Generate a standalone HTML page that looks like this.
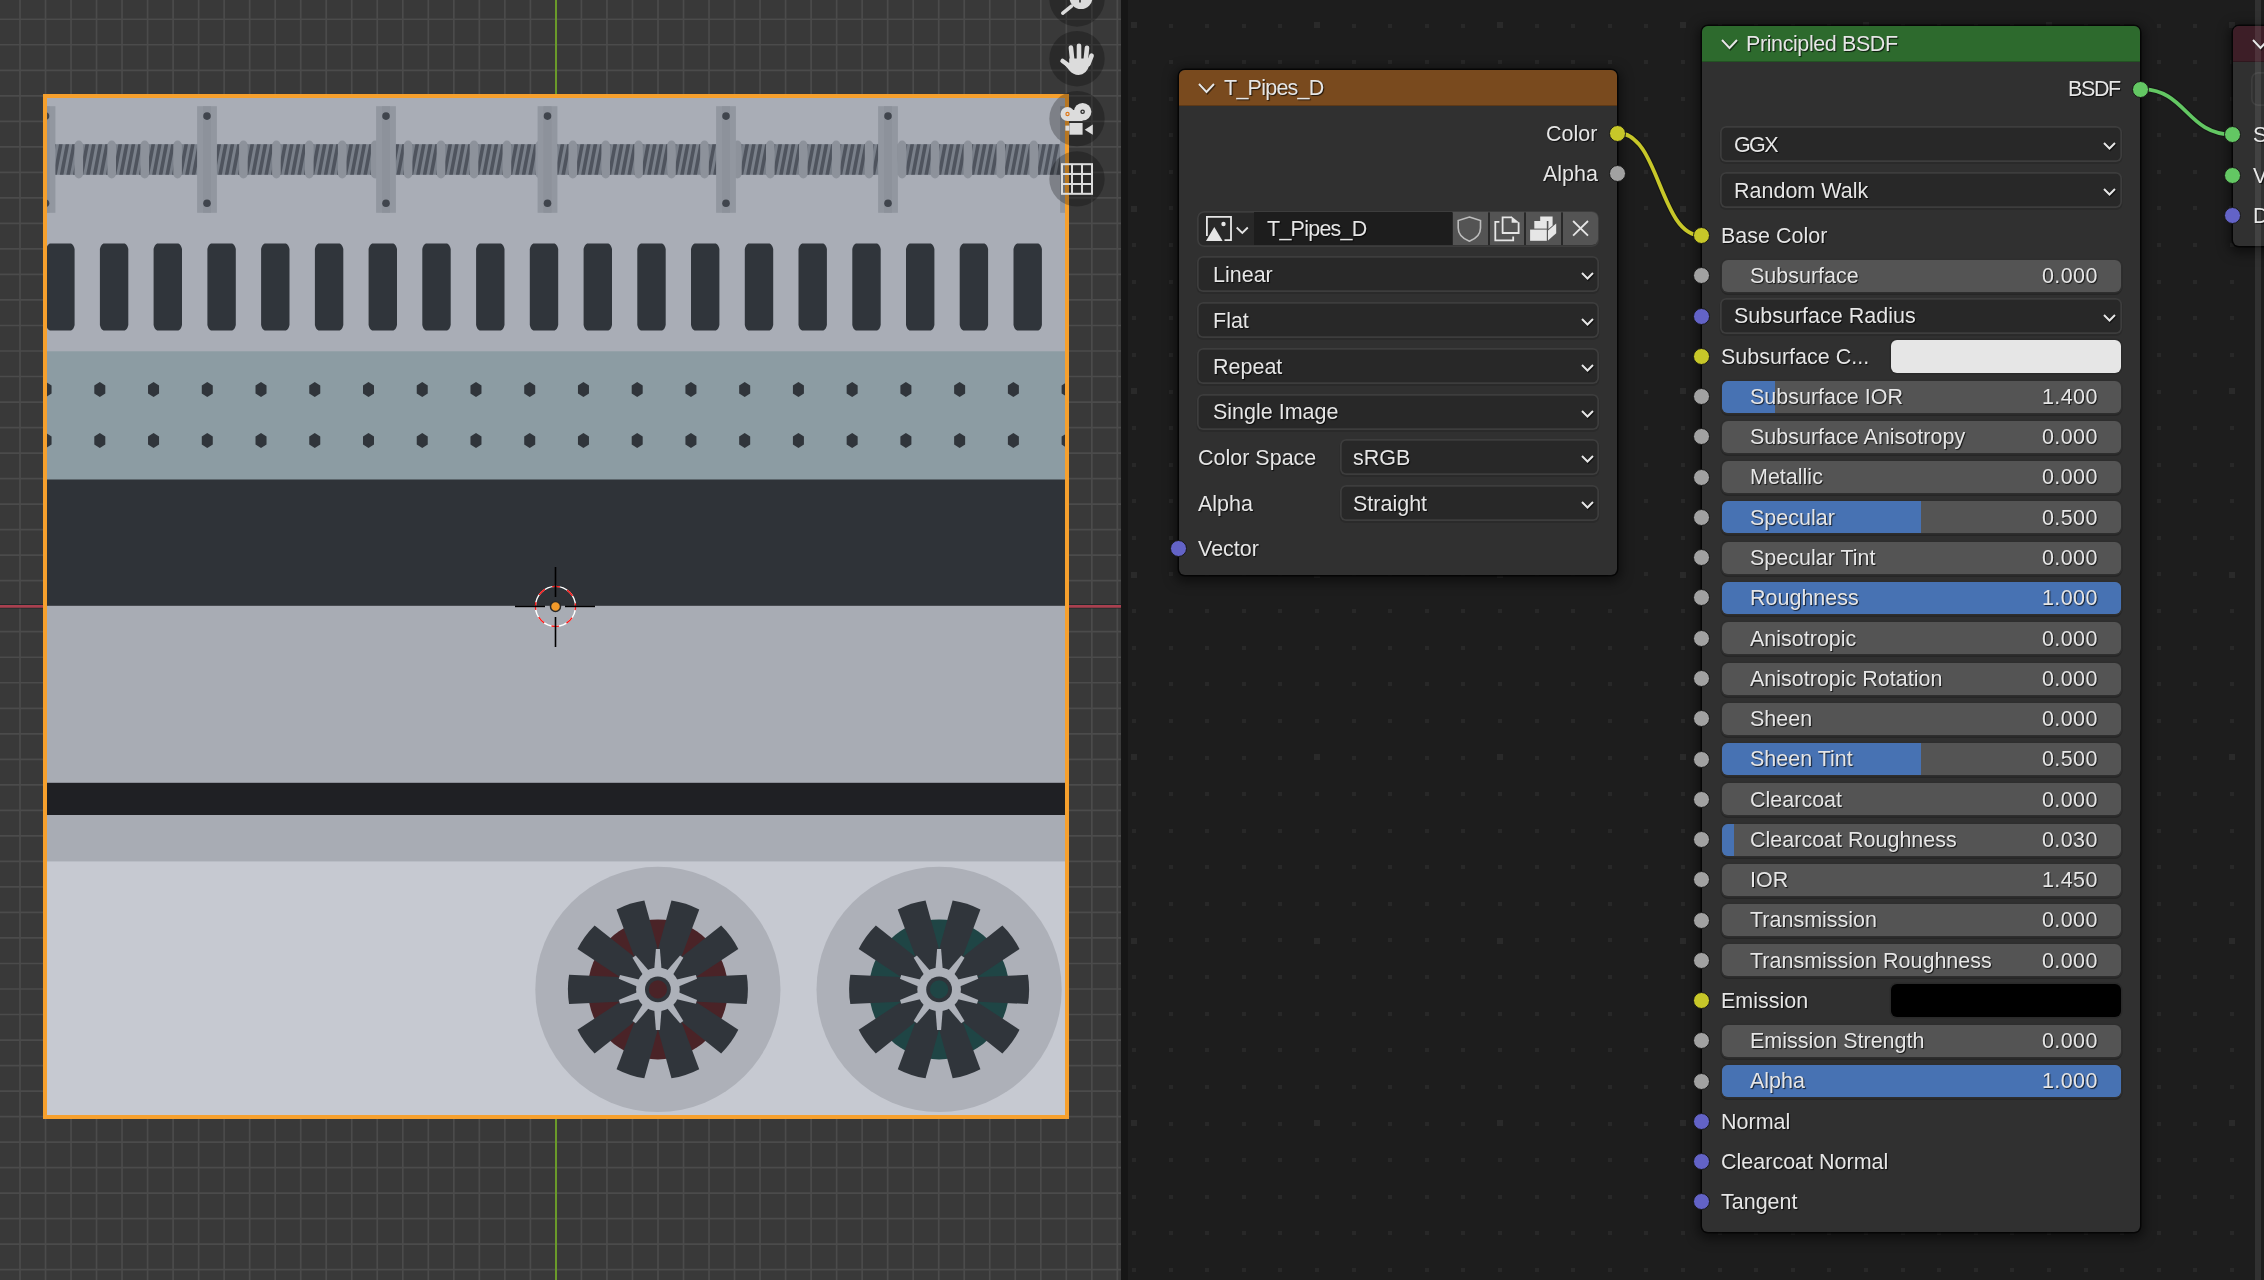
<!DOCTYPE html>
<html><head><meta charset="utf-8"><title>Blender</title>
<style>
html,body{margin:0;padding:0;width:2264px;height:1280px;overflow:hidden;background:#1d1d1d;}
*{box-sizing:border-box;}
.abs{position:absolute;}
.t{position:absolute;font-family:"Liberation Sans", sans-serif;font-size:21.5px;line-height:1;color:#e6e6e6;white-space:nowrap;text-shadow:1px 1px 1px rgba(0,0,0,0.75);will-change:transform;}
.node{position:absolute;background:#303030;border-radius:6px;box-shadow:0 0 0 1.5px rgba(0,0,0,0.7),0 3px 12px 4px rgba(0,0,0,0.5);}
.hdr{position:absolute;left:0;top:0;right:0;border-radius:6px 6px 0 0;box-shadow:inset 0 -1px 0 rgba(0,0,0,0.22);}
.sl{position:absolute;background:#545454;border-radius:6px;box-shadow:0 0 0 1.5px #2e2e2e, 0 1.5px 0 1.5px #262626;overflow:hidden;}
.fill{position:absolute;left:0;top:0;bottom:0;background:#4772b3;}
.dd{position:absolute;background:#282828;border-radius:6px;box-shadow:inset 0 0 0 1.7px #3d3d3d, 0 1.5px 0 0.5px #2a2a2a;}
.sock{position:absolute;width:17px;height:17px;border-radius:50%;border:1.7px solid #181818;}
</style></head><body>

<svg class="abs" style="left:0;top:0" width="1121" height="1280" viewBox="0 0 1121 1280">
<rect x="0" y="0" width="1121" height="1280" fill="#393939"/>
<g stroke="#4b4b4b" stroke-width="1.7"><line x1="19.98" y1="0" x2="19.98" y2="1280"/><line x1="45.50" y1="0" x2="45.50" y2="1280"/><line x1="71.02" y1="0" x2="71.02" y2="1280"/><line x1="96.54" y1="0" x2="96.54" y2="1280"/><line x1="122.06" y1="0" x2="122.06" y2="1280"/><line x1="147.58" y1="0" x2="147.58" y2="1280"/><line x1="173.10" y1="0" x2="173.10" y2="1280"/><line x1="198.62" y1="0" x2="198.62" y2="1280"/><line x1="224.14" y1="0" x2="224.14" y2="1280"/><line x1="249.66" y1="0" x2="249.66" y2="1280"/><line x1="275.18" y1="0" x2="275.18" y2="1280"/><line x1="300.70" y1="0" x2="300.70" y2="1280"/><line x1="326.22" y1="0" x2="326.22" y2="1280"/><line x1="351.74" y1="0" x2="351.74" y2="1280"/><line x1="377.26" y1="0" x2="377.26" y2="1280"/><line x1="402.78" y1="0" x2="402.78" y2="1280"/><line x1="428.30" y1="0" x2="428.30" y2="1280"/><line x1="453.82" y1="0" x2="453.82" y2="1280"/><line x1="479.34" y1="0" x2="479.34" y2="1280"/><line x1="504.86" y1="0" x2="504.86" y2="1280"/><line x1="530.38" y1="0" x2="530.38" y2="1280"/><line x1="555.90" y1="0" x2="555.90" y2="1280"/><line x1="581.42" y1="0" x2="581.42" y2="1280"/><line x1="606.94" y1="0" x2="606.94" y2="1280"/><line x1="632.46" y1="0" x2="632.46" y2="1280"/><line x1="657.98" y1="0" x2="657.98" y2="1280"/><line x1="683.50" y1="0" x2="683.50" y2="1280"/><line x1="709.02" y1="0" x2="709.02" y2="1280"/><line x1="734.54" y1="0" x2="734.54" y2="1280"/><line x1="760.06" y1="0" x2="760.06" y2="1280"/><line x1="785.58" y1="0" x2="785.58" y2="1280"/><line x1="811.10" y1="0" x2="811.10" y2="1280"/><line x1="836.62" y1="0" x2="836.62" y2="1280"/><line x1="862.14" y1="0" x2="862.14" y2="1280"/><line x1="887.66" y1="0" x2="887.66" y2="1280"/><line x1="913.18" y1="0" x2="913.18" y2="1280"/><line x1="938.70" y1="0" x2="938.70" y2="1280"/><line x1="964.22" y1="0" x2="964.22" y2="1280"/><line x1="989.74" y1="0" x2="989.74" y2="1280"/><line x1="1015.26" y1="0" x2="1015.26" y2="1280"/><line x1="1040.78" y1="0" x2="1040.78" y2="1280"/><line x1="1066.30" y1="0" x2="1066.30" y2="1280"/><line x1="1091.82" y1="0" x2="1091.82" y2="1280"/><line x1="1117.34" y1="0" x2="1117.34" y2="1280"/><line x1="0" y1="19.24" x2="1121" y2="19.24"/><line x1="0" y1="44.76" x2="1121" y2="44.76"/><line x1="0" y1="70.28" x2="1121" y2="70.28"/><line x1="0" y1="95.80" x2="1121" y2="95.80"/><line x1="0" y1="121.32" x2="1121" y2="121.32"/><line x1="0" y1="146.84" x2="1121" y2="146.84"/><line x1="0" y1="172.36" x2="1121" y2="172.36"/><line x1="0" y1="197.88" x2="1121" y2="197.88"/><line x1="0" y1="223.40" x2="1121" y2="223.40"/><line x1="0" y1="248.92" x2="1121" y2="248.92"/><line x1="0" y1="274.44" x2="1121" y2="274.44"/><line x1="0" y1="299.96" x2="1121" y2="299.96"/><line x1="0" y1="325.48" x2="1121" y2="325.48"/><line x1="0" y1="351.00" x2="1121" y2="351.00"/><line x1="0" y1="376.52" x2="1121" y2="376.52"/><line x1="0" y1="402.04" x2="1121" y2="402.04"/><line x1="0" y1="427.56" x2="1121" y2="427.56"/><line x1="0" y1="453.08" x2="1121" y2="453.08"/><line x1="0" y1="478.60" x2="1121" y2="478.60"/><line x1="0" y1="504.12" x2="1121" y2="504.12"/><line x1="0" y1="529.64" x2="1121" y2="529.64"/><line x1="0" y1="555.16" x2="1121" y2="555.16"/><line x1="0" y1="580.68" x2="1121" y2="580.68"/><line x1="0" y1="606.20" x2="1121" y2="606.20"/><line x1="0" y1="631.72" x2="1121" y2="631.72"/><line x1="0" y1="657.24" x2="1121" y2="657.24"/><line x1="0" y1="682.76" x2="1121" y2="682.76"/><line x1="0" y1="708.28" x2="1121" y2="708.28"/><line x1="0" y1="733.80" x2="1121" y2="733.80"/><line x1="0" y1="759.32" x2="1121" y2="759.32"/><line x1="0" y1="784.84" x2="1121" y2="784.84"/><line x1="0" y1="810.36" x2="1121" y2="810.36"/><line x1="0" y1="835.88" x2="1121" y2="835.88"/><line x1="0" y1="861.40" x2="1121" y2="861.40"/><line x1="0" y1="886.92" x2="1121" y2="886.92"/><line x1="0" y1="912.44" x2="1121" y2="912.44"/><line x1="0" y1="937.96" x2="1121" y2="937.96"/><line x1="0" y1="963.48" x2="1121" y2="963.48"/><line x1="0" y1="989.00" x2="1121" y2="989.00"/><line x1="0" y1="1014.52" x2="1121" y2="1014.52"/><line x1="0" y1="1040.04" x2="1121" y2="1040.04"/><line x1="0" y1="1065.56" x2="1121" y2="1065.56"/><line x1="0" y1="1091.08" x2="1121" y2="1091.08"/><line x1="0" y1="1116.60" x2="1121" y2="1116.60"/><line x1="0" y1="1142.12" x2="1121" y2="1142.12"/><line x1="0" y1="1167.64" x2="1121" y2="1167.64"/><line x1="0" y1="1193.16" x2="1121" y2="1193.16"/><line x1="0" y1="1218.68" x2="1121" y2="1218.68"/><line x1="0" y1="1244.20" x2="1121" y2="1244.20"/><line x1="0" y1="1269.72" x2="1121" y2="1269.72"/></g>
<line x1="0" y1="606.3" x2="1121" y2="606.3" stroke="#1e2a2a" stroke-width="4.5"/>
<line x1="0" y1="606.3" x2="1121" y2="606.3" stroke="#a8404f" stroke-width="2.8"/>
<line x1="556" y1="0" x2="556" y2="1280" stroke="#6a9a2a" stroke-width="2"/>
</svg>
<div class="abs" style="left:43px;top:94px;width:1026px;height:1025px;background:#f6a02d;"></div>
<svg class="abs" style="left:47px;top:98px" width="1018" height="1017" viewBox="47 98 1018 1017"><defs><filter id="tb" x="-1%" y="-1%" width="102%" height="102%" color-interpolation-filters="sRGB"><feGaussianBlur stdDeviation="0.55"/></filter></defs><g filter="url(#tb)">
<rect x="43" y="94" width="1026" height="1026" fill="#a9adb6"/><rect x="43" y="94" width="1026" height="258" fill="#a9adb6"/><rect x="43" y="144.2" width="1026" height="30.6" fill="#7a808a"/><g fill="#4f545e"><polygon points="40.0,174.8 43.6,174.8 49.4,144.2 45.8,144.2"/><polygon points="46.6,174.8 50.2,174.8 56.0,144.2 52.4,144.2"/><polygon points="53.2,174.8 56.8,174.8 62.6,144.2 59.0,144.2"/><polygon points="59.8,174.8 63.4,174.8 69.2,144.2 65.6,144.2"/><polygon points="66.4,174.8 70.0,174.8 75.8,144.2 72.2,144.2"/><polygon points="73.0,174.8 76.6,174.8 82.4,144.2 78.8,144.2"/><polygon points="79.6,174.8 83.2,174.8 89.0,144.2 85.4,144.2"/><polygon points="86.2,174.8 89.8,174.8 95.6,144.2 92.0,144.2"/><polygon points="92.8,174.8 96.4,174.8 102.2,144.2 98.6,144.2"/><polygon points="99.4,174.8 103.0,174.8 108.8,144.2 105.2,144.2"/><polygon points="106.0,174.8 109.6,174.8 115.4,144.2 111.8,144.2"/><polygon points="112.6,174.8 116.2,174.8 122.0,144.2 118.4,144.2"/><polygon points="119.2,174.8 122.8,174.8 128.6,144.2 125.0,144.2"/><polygon points="125.8,174.8 129.4,174.8 135.2,144.2 131.6,144.2"/><polygon points="132.4,174.8 136.0,174.8 141.8,144.2 138.2,144.2"/><polygon points="139.0,174.8 142.6,174.8 148.4,144.2 144.8,144.2"/><polygon points="145.6,174.8 149.2,174.8 155.0,144.2 151.4,144.2"/><polygon points="152.2,174.8 155.8,174.8 161.6,144.2 158.0,144.2"/><polygon points="158.8,174.8 162.4,174.8 168.2,144.2 164.6,144.2"/><polygon points="165.4,174.8 169.0,174.8 174.8,144.2 171.2,144.2"/><polygon points="172.0,174.8 175.6,174.8 181.4,144.2 177.8,144.2"/><polygon points="178.6,174.8 182.2,174.8 188.0,144.2 184.4,144.2"/><polygon points="185.2,174.8 188.8,174.8 194.6,144.2 191.0,144.2"/><polygon points="191.8,174.8 195.4,174.8 201.2,144.2 197.6,144.2"/><polygon points="198.4,174.8 202.0,174.8 207.8,144.2 204.2,144.2"/><polygon points="205.0,174.8 208.6,174.8 214.4,144.2 210.8,144.2"/><polygon points="211.6,174.8 215.2,174.8 221.0,144.2 217.4,144.2"/><polygon points="218.2,174.8 221.8,174.8 227.6,144.2 224.0,144.2"/><polygon points="224.8,174.8 228.4,174.8 234.2,144.2 230.6,144.2"/><polygon points="231.4,174.8 235.0,174.8 240.8,144.2 237.2,144.2"/><polygon points="238.0,174.8 241.6,174.8 247.4,144.2 243.8,144.2"/><polygon points="244.6,174.8 248.2,174.8 254.0,144.2 250.4,144.2"/><polygon points="251.2,174.8 254.8,174.8 260.6,144.2 257.0,144.2"/><polygon points="257.8,174.8 261.4,174.8 267.2,144.2 263.6,144.2"/><polygon points="264.4,174.8 268.0,174.8 273.8,144.2 270.2,144.2"/><polygon points="271.0,174.8 274.6,174.8 280.4,144.2 276.8,144.2"/><polygon points="277.6,174.8 281.2,174.8 287.0,144.2 283.4,144.2"/><polygon points="284.2,174.8 287.8,174.8 293.6,144.2 290.0,144.2"/><polygon points="290.8,174.8 294.4,174.8 300.2,144.2 296.6,144.2"/><polygon points="297.4,174.8 301.0,174.8 306.8,144.2 303.2,144.2"/><polygon points="304.0,174.8 307.6,174.8 313.4,144.2 309.8,144.2"/><polygon points="310.6,174.8 314.2,174.8 320.0,144.2 316.4,144.2"/><polygon points="317.2,174.8 320.8,174.8 326.6,144.2 323.0,144.2"/><polygon points="323.8,174.8 327.4,174.8 333.2,144.2 329.6,144.2"/><polygon points="330.4,174.8 334.0,174.8 339.8,144.2 336.2,144.2"/><polygon points="337.0,174.8 340.6,174.8 346.4,144.2 342.8,144.2"/><polygon points="343.6,174.8 347.2,174.8 353.0,144.2 349.4,144.2"/><polygon points="350.2,174.8 353.8,174.8 359.6,144.2 356.0,144.2"/><polygon points="356.8,174.8 360.4,174.8 366.2,144.2 362.6,144.2"/><polygon points="363.4,174.8 367.0,174.8 372.8,144.2 369.2,144.2"/><polygon points="370.0,174.8 373.6,174.8 379.4,144.2 375.8,144.2"/><polygon points="376.6,174.8 380.2,174.8 386.0,144.2 382.4,144.2"/><polygon points="383.2,174.8 386.8,174.8 392.6,144.2 389.0,144.2"/><polygon points="389.8,174.8 393.4,174.8 399.2,144.2 395.6,144.2"/><polygon points="396.4,174.8 400.0,174.8 405.8,144.2 402.2,144.2"/><polygon points="403.0,174.8 406.6,174.8 412.4,144.2 408.8,144.2"/><polygon points="409.6,174.8 413.2,174.8 419.0,144.2 415.4,144.2"/><polygon points="416.2,174.8 419.8,174.8 425.6,144.2 422.0,144.2"/><polygon points="422.8,174.8 426.4,174.8 432.2,144.2 428.6,144.2"/><polygon points="429.4,174.8 433.0,174.8 438.8,144.2 435.2,144.2"/><polygon points="436.0,174.8 439.6,174.8 445.4,144.2 441.8,144.2"/><polygon points="442.6,174.8 446.2,174.8 452.0,144.2 448.4,144.2"/><polygon points="449.2,174.8 452.8,174.8 458.6,144.2 455.0,144.2"/><polygon points="455.8,174.8 459.4,174.8 465.2,144.2 461.6,144.2"/><polygon points="462.4,174.8 466.0,174.8 471.8,144.2 468.2,144.2"/><polygon points="469.0,174.8 472.6,174.8 478.4,144.2 474.8,144.2"/><polygon points="475.6,174.8 479.2,174.8 485.0,144.2 481.4,144.2"/><polygon points="482.2,174.8 485.8,174.8 491.6,144.2 488.0,144.2"/><polygon points="488.8,174.8 492.4,174.8 498.2,144.2 494.6,144.2"/><polygon points="495.4,174.8 499.0,174.8 504.8,144.2 501.2,144.2"/><polygon points="502.0,174.8 505.6,174.8 511.4,144.2 507.8,144.2"/><polygon points="508.6,174.8 512.2,174.8 518.0,144.2 514.4,144.2"/><polygon points="515.2,174.8 518.8,174.8 524.6,144.2 521.0,144.2"/><polygon points="521.8,174.8 525.4,174.8 531.2,144.2 527.6,144.2"/><polygon points="528.4,174.8 532.0,174.8 537.8,144.2 534.2,144.2"/><polygon points="535.0,174.8 538.6,174.8 544.4,144.2 540.8,144.2"/><polygon points="541.6,174.8 545.2,174.8 551.0,144.2 547.4,144.2"/><polygon points="548.2,174.8 551.8,174.8 557.6,144.2 554.0,144.2"/><polygon points="554.8,174.8 558.4,174.8 564.2,144.2 560.6,144.2"/><polygon points="561.4,174.8 565.0,174.8 570.8,144.2 567.2,144.2"/><polygon points="568.0,174.8 571.6,174.8 577.4,144.2 573.8,144.2"/><polygon points="574.6,174.8 578.2,174.8 584.0,144.2 580.4,144.2"/><polygon points="581.2,174.8 584.8,174.8 590.6,144.2 587.0,144.2"/><polygon points="587.8,174.8 591.4,174.8 597.2,144.2 593.6,144.2"/><polygon points="594.4,174.8 598.0,174.8 603.8,144.2 600.2,144.2"/><polygon points="601.0,174.8 604.6,174.8 610.4,144.2 606.8,144.2"/><polygon points="607.6,174.8 611.2,174.8 617.0,144.2 613.4,144.2"/><polygon points="614.2,174.8 617.8,174.8 623.6,144.2 620.0,144.2"/><polygon points="620.8,174.8 624.4,174.8 630.2,144.2 626.6,144.2"/><polygon points="627.4,174.8 631.0,174.8 636.8,144.2 633.2,144.2"/><polygon points="634.0,174.8 637.6,174.8 643.4,144.2 639.8,144.2"/><polygon points="640.6,174.8 644.2,174.8 650.0,144.2 646.4,144.2"/><polygon points="647.2,174.8 650.8,174.8 656.6,144.2 653.0,144.2"/><polygon points="653.8,174.8 657.4,174.8 663.2,144.2 659.6,144.2"/><polygon points="660.4,174.8 664.0,174.8 669.8,144.2 666.2,144.2"/><polygon points="667.0,174.8 670.6,174.8 676.4,144.2 672.8,144.2"/><polygon points="673.6,174.8 677.2,174.8 683.0,144.2 679.4,144.2"/><polygon points="680.2,174.8 683.8,174.8 689.6,144.2 686.0,144.2"/><polygon points="686.8,174.8 690.4,174.8 696.2,144.2 692.6,144.2"/><polygon points="693.4,174.8 697.0,174.8 702.8,144.2 699.2,144.2"/><polygon points="700.0,174.8 703.6,174.8 709.4,144.2 705.8,144.2"/><polygon points="706.6,174.8 710.2,174.8 716.0,144.2 712.4,144.2"/><polygon points="713.2,174.8 716.8,174.8 722.6,144.2 719.0,144.2"/><polygon points="719.8,174.8 723.4,174.8 729.2,144.2 725.6,144.2"/><polygon points="726.4,174.8 730.0,174.8 735.8,144.2 732.2,144.2"/><polygon points="733.0,174.8 736.6,174.8 742.4,144.2 738.8,144.2"/><polygon points="739.6,174.8 743.2,174.8 749.0,144.2 745.4,144.2"/><polygon points="746.2,174.8 749.8,174.8 755.6,144.2 752.0,144.2"/><polygon points="752.8,174.8 756.4,174.8 762.2,144.2 758.6,144.2"/><polygon points="759.4,174.8 763.0,174.8 768.8,144.2 765.2,144.2"/><polygon points="766.0,174.8 769.6,174.8 775.4,144.2 771.8,144.2"/><polygon points="772.6,174.8 776.2,174.8 782.0,144.2 778.4,144.2"/><polygon points="779.2,174.8 782.8,174.8 788.6,144.2 785.0,144.2"/><polygon points="785.8,174.8 789.4,174.8 795.2,144.2 791.6,144.2"/><polygon points="792.4,174.8 796.0,174.8 801.8,144.2 798.2,144.2"/><polygon points="799.0,174.8 802.6,174.8 808.4,144.2 804.8,144.2"/><polygon points="805.6,174.8 809.2,174.8 815.0,144.2 811.4,144.2"/><polygon points="812.2,174.8 815.8,174.8 821.6,144.2 818.0,144.2"/><polygon points="818.8,174.8 822.4,174.8 828.2,144.2 824.6,144.2"/><polygon points="825.4,174.8 829.0,174.8 834.8,144.2 831.2,144.2"/><polygon points="832.0,174.8 835.6,174.8 841.4,144.2 837.8,144.2"/><polygon points="838.6,174.8 842.2,174.8 848.0,144.2 844.4,144.2"/><polygon points="845.2,174.8 848.8,174.8 854.6,144.2 851.0,144.2"/><polygon points="851.8,174.8 855.4,174.8 861.2,144.2 857.6,144.2"/><polygon points="858.4,174.8 862.0,174.8 867.8,144.2 864.2,144.2"/><polygon points="865.0,174.8 868.6,174.8 874.4,144.2 870.8,144.2"/><polygon points="871.6,174.8 875.2,174.8 881.0,144.2 877.4,144.2"/><polygon points="878.2,174.8 881.8,174.8 887.6,144.2 884.0,144.2"/><polygon points="884.8,174.8 888.4,174.8 894.2,144.2 890.6,144.2"/><polygon points="891.4,174.8 895.0,174.8 900.8,144.2 897.2,144.2"/><polygon points="898.0,174.8 901.6,174.8 907.4,144.2 903.8,144.2"/><polygon points="904.6,174.8 908.2,174.8 914.0,144.2 910.4,144.2"/><polygon points="911.2,174.8 914.8,174.8 920.6,144.2 917.0,144.2"/><polygon points="917.8,174.8 921.4,174.8 927.2,144.2 923.6,144.2"/><polygon points="924.4,174.8 928.0,174.8 933.8,144.2 930.2,144.2"/><polygon points="931.0,174.8 934.6,174.8 940.4,144.2 936.8,144.2"/><polygon points="937.6,174.8 941.2,174.8 947.0,144.2 943.4,144.2"/><polygon points="944.2,174.8 947.8,174.8 953.6,144.2 950.0,144.2"/><polygon points="950.8,174.8 954.4,174.8 960.2,144.2 956.6,144.2"/><polygon points="957.4,174.8 961.0,174.8 966.8,144.2 963.2,144.2"/><polygon points="964.0,174.8 967.6,174.8 973.4,144.2 969.8,144.2"/><polygon points="970.6,174.8 974.2,174.8 980.0,144.2 976.4,144.2"/><polygon points="977.2,174.8 980.8,174.8 986.6,144.2 983.0,144.2"/><polygon points="983.8,174.8 987.4,174.8 993.2,144.2 989.6,144.2"/><polygon points="990.4,174.8 994.0,174.8 999.8,144.2 996.2,144.2"/><polygon points="997.0,174.8 1000.6,174.8 1006.4,144.2 1002.8,144.2"/><polygon points="1003.6,174.8 1007.2,174.8 1013.0,144.2 1009.4,144.2"/><polygon points="1010.2,174.8 1013.8,174.8 1019.6,144.2 1016.0,144.2"/><polygon points="1016.8,174.8 1020.4,174.8 1026.2,144.2 1022.6,144.2"/><polygon points="1023.4,174.8 1027.0,174.8 1032.8,144.2 1029.2,144.2"/><polygon points="1030.0,174.8 1033.6,174.8 1039.4,144.2 1035.8,144.2"/><polygon points="1036.6,174.8 1040.2,174.8 1046.0,144.2 1042.4,144.2"/><polygon points="1043.2,174.8 1046.8,174.8 1052.6,144.2 1049.0,144.2"/><polygon points="1049.8,174.8 1053.4,174.8 1059.2,144.2 1055.6,144.2"/><polygon points="1056.4,174.8 1060.0,174.8 1065.8,144.2 1062.2,144.2"/><polygon points="1063.0,174.8 1066.6,174.8 1072.4,144.2 1068.8,144.2"/><polygon points="1069.6,174.8 1073.2,174.8 1079.0,144.2 1075.4,144.2"/></g><rect x="41.6" y="140.6" width="8.6" height="37.8" rx="4.3" ry="5" fill="#8d929b"/><rect x="74.5" y="140.6" width="8.6" height="37.8" rx="4.3" ry="5" fill="#8d929b"/><rect x="107.4" y="140.6" width="8.6" height="37.8" rx="4.3" ry="5" fill="#8d929b"/><rect x="140.4" y="140.6" width="8.6" height="37.8" rx="4.3" ry="5" fill="#8d929b"/><rect x="173.3" y="140.6" width="8.6" height="37.8" rx="4.3" ry="5" fill="#8d929b"/><rect x="206.2" y="140.6" width="8.6" height="37.8" rx="4.3" ry="5" fill="#8d929b"/><rect x="239.1" y="140.6" width="8.6" height="37.8" rx="4.3" ry="5" fill="#8d929b"/><rect x="272.1" y="140.6" width="8.6" height="37.8" rx="4.3" ry="5" fill="#8d929b"/><rect x="305.0" y="140.6" width="8.6" height="37.8" rx="4.3" ry="5" fill="#8d929b"/><rect x="337.9" y="140.6" width="8.6" height="37.8" rx="4.3" ry="5" fill="#8d929b"/><rect x="370.9" y="140.6" width="8.6" height="37.8" rx="4.3" ry="5" fill="#8d929b"/><rect x="403.8" y="140.6" width="8.6" height="37.8" rx="4.3" ry="5" fill="#8d929b"/><rect x="436.7" y="140.6" width="8.6" height="37.8" rx="4.3" ry="5" fill="#8d929b"/><rect x="469.7" y="140.6" width="8.6" height="37.8" rx="4.3" ry="5" fill="#8d929b"/><rect x="502.6" y="140.6" width="8.6" height="37.8" rx="4.3" ry="5" fill="#8d929b"/><rect x="535.5" y="140.6" width="8.6" height="37.8" rx="4.3" ry="5" fill="#8d929b"/><rect x="568.5" y="140.6" width="8.6" height="37.8" rx="4.3" ry="5" fill="#8d929b"/><rect x="601.4" y="140.6" width="8.6" height="37.8" rx="4.3" ry="5" fill="#8d929b"/><rect x="634.3" y="140.6" width="8.6" height="37.8" rx="4.3" ry="5" fill="#8d929b"/><rect x="667.2" y="140.6" width="8.6" height="37.8" rx="4.3" ry="5" fill="#8d929b"/><rect x="700.2" y="140.6" width="8.6" height="37.8" rx="4.3" ry="5" fill="#8d929b"/><rect x="733.1" y="140.6" width="8.6" height="37.8" rx="4.3" ry="5" fill="#8d929b"/><rect x="766.0" y="140.6" width="8.6" height="37.8" rx="4.3" ry="5" fill="#8d929b"/><rect x="799.0" y="140.6" width="8.6" height="37.8" rx="4.3" ry="5" fill="#8d929b"/><rect x="831.9" y="140.6" width="8.6" height="37.8" rx="4.3" ry="5" fill="#8d929b"/><rect x="864.8" y="140.6" width="8.6" height="37.8" rx="4.3" ry="5" fill="#8d929b"/><rect x="897.8" y="140.6" width="8.6" height="37.8" rx="4.3" ry="5" fill="#8d929b"/><rect x="930.7" y="140.6" width="8.6" height="37.8" rx="4.3" ry="5" fill="#8d929b"/><rect x="963.6" y="140.6" width="8.6" height="37.8" rx="4.3" ry="5" fill="#8d929b"/><rect x="996.5" y="140.6" width="8.6" height="37.8" rx="4.3" ry="5" fill="#8d929b"/><rect x="1029.5" y="140.6" width="8.6" height="37.8" rx="4.3" ry="5" fill="#8d929b"/><rect x="1062.4" y="140.6" width="8.6" height="37.8" rx="4.3" ry="5" fill="#8d929b"/><rect x="35.6" y="106.2" width="19.8" height="106.6" fill="#9297a0"/><rect x="41.5" y="106.2" width="8" height="106.6" fill="#8b9099" opacity="0.7"/><circle cx="45.5" cy="116.1" r="3.8" fill="#40454d"/><circle cx="45.5" cy="203.3" r="3.8" fill="#40454d"/><rect x="197.1" y="106.2" width="19.8" height="106.6" fill="#9297a0"/><rect x="203.0" y="106.2" width="8" height="106.6" fill="#8b9099" opacity="0.7"/><circle cx="207.0" cy="116.1" r="3.8" fill="#40454d"/><circle cx="207.0" cy="203.3" r="3.8" fill="#40454d"/><rect x="376.1" y="106.2" width="19.8" height="106.6" fill="#9297a0"/><rect x="382.0" y="106.2" width="8" height="106.6" fill="#8b9099" opacity="0.7"/><circle cx="386.0" cy="116.1" r="3.8" fill="#40454d"/><circle cx="386.0" cy="203.3" r="3.8" fill="#40454d"/><rect x="537.6" y="106.2" width="19.8" height="106.6" fill="#9297a0"/><rect x="543.5" y="106.2" width="8" height="106.6" fill="#8b9099" opacity="0.7"/><circle cx="547.5" cy="116.1" r="3.8" fill="#40454d"/><circle cx="547.5" cy="203.3" r="3.8" fill="#40454d"/><rect x="716.1" y="106.2" width="19.8" height="106.6" fill="#9297a0"/><rect x="722.0" y="106.2" width="8" height="106.6" fill="#8b9099" opacity="0.7"/><circle cx="726.0" cy="116.1" r="3.8" fill="#40454d"/><circle cx="726.0" cy="203.3" r="3.8" fill="#40454d"/><rect x="878.1" y="106.2" width="19.8" height="106.6" fill="#9297a0"/><rect x="884.0" y="106.2" width="8" height="106.6" fill="#8b9099" opacity="0.7"/><circle cx="888.0" cy="116.1" r="3.8" fill="#40454d"/><circle cx="888.0" cy="203.3" r="3.8" fill="#40454d"/><rect x="1060.1" y="106.2" width="19.8" height="106.6" fill="#9297a0"/><rect x="1066.0" y="106.2" width="8" height="106.6" fill="#8b9099" opacity="0.7"/><circle cx="1070.0" cy="116.1" r="3.8" fill="#40454d"/><circle cx="1070.0" cy="203.3" r="3.8" fill="#40454d"/><path d="M49.8,243.4 L71.0,243.4 Q73.6,244.4 74.6,249.0 L74.6,325.0 Q73.6,329.6 71.0,330.6 L49.8,330.6 Q47.2,329.6 46.2,325.0 L46.2,249.0 Q47.2,244.4 49.8,243.4 Z" fill="#30353b"/><path d="M103.5,243.4 L124.7,243.4 Q127.3,244.4 128.3,249.0 L128.3,325.0 Q127.3,329.6 124.7,330.6 L103.5,330.6 Q100.9,329.6 99.9,325.0 L99.9,249.0 Q100.9,244.4 103.5,243.4 Z" fill="#30353b"/><path d="M157.2,243.4 L178.4,243.4 Q181.0,244.4 182.0,249.0 L182.0,325.0 Q181.0,329.6 178.4,330.6 L157.2,330.6 Q154.6,329.6 153.6,325.0 L153.6,249.0 Q154.6,244.4 157.2,243.4 Z" fill="#30353b"/><path d="M211.0,243.4 L232.2,243.4 Q234.8,244.4 235.8,249.0 L235.8,325.0 Q234.8,329.6 232.2,330.6 L211.0,330.6 Q208.4,329.6 207.4,325.0 L207.4,249.0 Q208.4,244.4 211.0,243.4 Z" fill="#30353b"/><path d="M264.7,243.4 L285.9,243.4 Q288.5,244.4 289.5,249.0 L289.5,325.0 Q288.5,329.6 285.9,330.6 L264.7,330.6 Q262.1,329.6 261.1,325.0 L261.1,249.0 Q262.1,244.4 264.7,243.4 Z" fill="#30353b"/><path d="M318.5,243.4 L339.7,243.4 Q342.3,244.4 343.3,249.0 L343.3,325.0 Q342.3,329.6 339.7,330.6 L318.5,330.6 Q315.9,329.6 314.9,325.0 L314.9,249.0 Q315.9,244.4 318.5,243.4 Z" fill="#30353b"/><path d="M372.2,243.4 L393.4,243.4 Q396.0,244.4 397.0,249.0 L397.0,325.0 Q396.0,329.6 393.4,330.6 L372.2,330.6 Q369.6,329.6 368.6,325.0 L368.6,249.0 Q369.6,244.4 372.2,243.4 Z" fill="#30353b"/><path d="M425.9,243.4 L447.1,243.4 Q449.7,244.4 450.7,249.0 L450.7,325.0 Q449.7,329.6 447.1,330.6 L425.9,330.6 Q423.3,329.6 422.3,325.0 L422.3,249.0 Q423.3,244.4 425.9,243.4 Z" fill="#30353b"/><path d="M479.7,243.4 L500.9,243.4 Q503.5,244.4 504.5,249.0 L504.5,325.0 Q503.5,329.6 500.9,330.6 L479.7,330.6 Q477.1,329.6 476.1,325.0 L476.1,249.0 Q477.1,244.4 479.7,243.4 Z" fill="#30353b"/><path d="M533.4,243.4 L554.6,243.4 Q557.2,244.4 558.2,249.0 L558.2,325.0 Q557.2,329.6 554.6,330.6 L533.4,330.6 Q530.8,329.6 529.8,325.0 L529.8,249.0 Q530.8,244.4 533.4,243.4 Z" fill="#30353b"/><path d="M587.2,243.4 L608.4,243.4 Q611.0,244.4 612.0,249.0 L612.0,325.0 Q611.0,329.6 608.4,330.6 L587.2,330.6 Q584.6,329.6 583.6,325.0 L583.6,249.0 Q584.6,244.4 587.2,243.4 Z" fill="#30353b"/><path d="M640.9,243.4 L662.1,243.4 Q664.7,244.4 665.7,249.0 L665.7,325.0 Q664.7,329.6 662.1,330.6 L640.9,330.6 Q638.3,329.6 637.3,325.0 L637.3,249.0 Q638.3,244.4 640.9,243.4 Z" fill="#30353b"/><path d="M694.6,243.4 L715.8,243.4 Q718.4,244.4 719.4,249.0 L719.4,325.0 Q718.4,329.6 715.8,330.6 L694.6,330.6 Q692.0,329.6 691.0,325.0 L691.0,249.0 Q692.0,244.4 694.6,243.4 Z" fill="#30353b"/><path d="M748.4,243.4 L769.6,243.4 Q772.2,244.4 773.2,249.0 L773.2,325.0 Q772.2,329.6 769.6,330.6 L748.4,330.6 Q745.8,329.6 744.8,325.0 L744.8,249.0 Q745.8,244.4 748.4,243.4 Z" fill="#30353b"/><path d="M802.1,243.4 L823.3,243.4 Q825.9,244.4 826.9,249.0 L826.9,325.0 Q825.9,329.6 823.3,330.6 L802.1,330.6 Q799.5,329.6 798.5,325.0 L798.5,249.0 Q799.5,244.4 802.1,243.4 Z" fill="#30353b"/><path d="M855.9,243.4 L877.1,243.4 Q879.7,244.4 880.7,249.0 L880.7,325.0 Q879.7,329.6 877.1,330.6 L855.9,330.6 Q853.3,329.6 852.3,325.0 L852.3,249.0 Q853.3,244.4 855.9,243.4 Z" fill="#30353b"/><path d="M909.6,243.4 L930.8,243.4 Q933.4,244.4 934.4,249.0 L934.4,325.0 Q933.4,329.6 930.8,330.6 L909.6,330.6 Q907.0,329.6 906.0,325.0 L906.0,249.0 Q907.0,244.4 909.6,243.4 Z" fill="#30353b"/><path d="M963.3,243.4 L984.5,243.4 Q987.1,244.4 988.1,249.0 L988.1,325.0 Q987.1,329.6 984.5,330.6 L963.3,330.6 Q960.7,329.6 959.7,325.0 L959.7,249.0 Q960.7,244.4 963.3,243.4 Z" fill="#30353b"/><path d="M1017.1,243.4 L1038.3,243.4 Q1040.9,244.4 1041.9,249.0 L1041.9,325.0 Q1040.9,329.6 1038.3,330.6 L1017.1,330.6 Q1014.5,329.6 1013.5,325.0 L1013.5,249.0 Q1014.5,244.4 1017.1,243.4 Z" fill="#30353b"/><path d="M1070.8,243.4 L1092.0,243.4 Q1094.6,244.4 1095.6,249.0 L1095.6,325.0 Q1094.6,329.6 1092.0,330.6 L1070.8,330.6 Q1068.2,329.6 1067.2,325.0 L1067.2,249.0 Q1068.2,244.4 1070.8,243.4 Z" fill="#30353b"/><rect x="43" y="351.3" width="1026" height="129.3" fill="#8c9ca3"/><polygon points="46.059999999999995,381.9 51.559999999999995,385.4 51.559999999999995,393.4 46.059999999999995,396.9 40.559999999999995,393.4 40.559999999999995,385.4" fill="#30353b"/><polygon points="46.059999999999995,433.1 51.559999999999995,436.6 51.559999999999995,444.6 46.059999999999995,448.1 40.559999999999995,444.6 40.559999999999995,436.6" fill="#30353b"/><polygon points="99.8,381.9 105.3,385.4 105.3,393.4 99.8,396.9 94.3,393.4 94.3,385.4" fill="#30353b"/><polygon points="99.8,433.1 105.3,436.6 105.3,444.6 99.8,448.1 94.3,444.6 94.3,436.6" fill="#30353b"/><polygon points="153.54,381.9 159.04,385.4 159.04,393.4 153.54,396.9 148.04,393.4 148.04,385.4" fill="#30353b"/><polygon points="153.54,433.1 159.04,436.6 159.04,444.6 153.54,448.1 148.04,444.6 148.04,436.6" fill="#30353b"/><polygon points="207.28,381.9 212.78,385.4 212.78,393.4 207.28,396.9 201.78,393.4 201.78,385.4" fill="#30353b"/><polygon points="207.28,433.1 212.78,436.6 212.78,444.6 207.28,448.1 201.78,444.6 201.78,436.6" fill="#30353b"/><polygon points="261.02,381.9 266.52,385.4 266.52,393.4 261.02,396.9 255.51999999999998,393.4 255.51999999999998,385.4" fill="#30353b"/><polygon points="261.02,433.1 266.52,436.6 266.52,444.6 261.02,448.1 255.51999999999998,444.6 255.51999999999998,436.6" fill="#30353b"/><polygon points="314.76,381.9 320.26,385.4 320.26,393.4 314.76,396.9 309.26,393.4 309.26,385.4" fill="#30353b"/><polygon points="314.76,433.1 320.26,436.6 320.26,444.6 314.76,448.1 309.26,444.6 309.26,436.6" fill="#30353b"/><polygon points="368.5,381.9 374.0,385.4 374.0,393.4 368.5,396.9 363.0,393.4 363.0,385.4" fill="#30353b"/><polygon points="368.5,433.1 374.0,436.6 374.0,444.6 368.5,448.1 363.0,444.6 363.0,436.6" fill="#30353b"/><polygon points="422.24,381.9 427.74,385.4 427.74,393.4 422.24,396.9 416.74,393.4 416.74,385.4" fill="#30353b"/><polygon points="422.24,433.1 427.74,436.6 427.74,444.6 422.24,448.1 416.74,444.6 416.74,436.6" fill="#30353b"/><polygon points="475.98,381.9 481.48,385.4 481.48,393.4 475.98,396.9 470.48,393.4 470.48,385.4" fill="#30353b"/><polygon points="475.98,433.1 481.48,436.6 481.48,444.6 475.98,448.1 470.48,444.6 470.48,436.6" fill="#30353b"/><polygon points="529.72,381.9 535.22,385.4 535.22,393.4 529.72,396.9 524.22,393.4 524.22,385.4" fill="#30353b"/><polygon points="529.72,433.1 535.22,436.6 535.22,444.6 529.72,448.1 524.22,444.6 524.22,436.6" fill="#30353b"/><polygon points="583.46,381.9 588.96,385.4 588.96,393.4 583.46,396.9 577.96,393.4 577.96,385.4" fill="#30353b"/><polygon points="583.46,433.1 588.96,436.6 588.96,444.6 583.46,448.1 577.96,444.6 577.96,436.6" fill="#30353b"/><polygon points="637.1999999999999,381.9 642.6999999999999,385.4 642.6999999999999,393.4 637.1999999999999,396.9 631.6999999999999,393.4 631.6999999999999,385.4" fill="#30353b"/><polygon points="637.1999999999999,433.1 642.6999999999999,436.6 642.6999999999999,444.6 637.1999999999999,448.1 631.6999999999999,444.6 631.6999999999999,436.6" fill="#30353b"/><polygon points="690.9399999999999,381.9 696.4399999999999,385.4 696.4399999999999,393.4 690.9399999999999,396.9 685.4399999999999,393.4 685.4399999999999,385.4" fill="#30353b"/><polygon points="690.9399999999999,433.1 696.4399999999999,436.6 696.4399999999999,444.6 690.9399999999999,448.1 685.4399999999999,444.6 685.4399999999999,436.6" fill="#30353b"/><polygon points="744.68,381.9 750.18,385.4 750.18,393.4 744.68,396.9 739.18,393.4 739.18,385.4" fill="#30353b"/><polygon points="744.68,433.1 750.18,436.6 750.18,444.6 744.68,448.1 739.18,444.6 739.18,436.6" fill="#30353b"/><polygon points="798.42,381.9 803.92,385.4 803.92,393.4 798.42,396.9 792.92,393.4 792.92,385.4" fill="#30353b"/><polygon points="798.42,433.1 803.92,436.6 803.92,444.6 798.42,448.1 792.92,444.6 792.92,436.6" fill="#30353b"/><polygon points="852.16,381.9 857.66,385.4 857.66,393.4 852.16,396.9 846.66,393.4 846.66,385.4" fill="#30353b"/><polygon points="852.16,433.1 857.66,436.6 857.66,444.6 852.16,448.1 846.66,444.6 846.66,436.6" fill="#30353b"/><polygon points="905.9,381.9 911.4,385.4 911.4,393.4 905.9,396.9 900.4,393.4 900.4,385.4" fill="#30353b"/><polygon points="905.9,433.1 911.4,436.6 911.4,444.6 905.9,448.1 900.4,444.6 900.4,436.6" fill="#30353b"/><polygon points="959.64,381.9 965.14,385.4 965.14,393.4 959.64,396.9 954.14,393.4 954.14,385.4" fill="#30353b"/><polygon points="959.64,433.1 965.14,436.6 965.14,444.6 959.64,448.1 954.14,444.6 954.14,436.6" fill="#30353b"/><polygon points="1013.38,381.9 1018.88,385.4 1018.88,393.4 1013.38,396.9 1007.88,393.4 1007.88,385.4" fill="#30353b"/><polygon points="1013.38,433.1 1018.88,436.6 1018.88,444.6 1013.38,448.1 1007.88,444.6 1007.88,436.6" fill="#30353b"/><polygon points="1067.1200000000001,381.9 1072.6200000000001,385.4 1072.6200000000001,393.4 1067.1200000000001,396.9 1061.6200000000001,393.4 1061.6200000000001,385.4" fill="#30353b"/><polygon points="1067.1200000000001,433.1 1072.6200000000001,436.6 1072.6200000000001,444.6 1067.1200000000001,448.1 1061.6200000000001,444.6 1061.6200000000001,436.6" fill="#30353b"/><polygon points="1120.8600000000001,381.9 1126.3600000000001,385.4 1126.3600000000001,393.4 1120.8600000000001,396.9 1115.3600000000001,393.4 1115.3600000000001,385.4" fill="#30353b"/><polygon points="1120.8600000000001,433.1 1126.3600000000001,436.6 1126.3600000000001,444.6 1120.8600000000001,448.1 1115.3600000000001,444.6 1115.3600000000001,436.6" fill="#30353b"/><rect x="43" y="479.5" width="1026" height="127.3" fill="#2f3338"/><rect x="43" y="605.8" width="1026" height="178" fill="#a8acb4"/><rect x="43" y="782.8" width="1026" height="33.2" fill="#1f2024"/><rect x="43" y="815" width="1026" height="47.4" fill="#a8acb4"/><rect x="43" y="861.4" width="1026" height="260" fill="#c6c9d1"/><g transform="translate(657.9,989.4)"><circle r="122.6" fill="#adb0b8"/><circle r="70" fill="#4a2327"/><path transform="rotate(18)" d="M-14.6,-88.8 A89 89 0 0 1 14.6,-88.8 L12.4,-40 L10.5,-24 L0,-16 L-10.5,-24 L-12.4,-40 Z" fill="#30353b"/><path transform="rotate(54)" d="M-14.6,-88.8 A89 89 0 0 1 14.6,-88.8 L12.4,-40 L10.5,-24 L0,-16 L-10.5,-24 L-12.4,-40 Z" fill="#30353b"/><path transform="rotate(90)" d="M-14.6,-88.8 A89 89 0 0 1 14.6,-88.8 L12.4,-40 L10.5,-24 L0,-16 L-10.5,-24 L-12.4,-40 Z" fill="#30353b"/><path transform="rotate(126)" d="M-14.6,-88.8 A89 89 0 0 1 14.6,-88.8 L12.4,-40 L10.5,-24 L0,-16 L-10.5,-24 L-12.4,-40 Z" fill="#30353b"/><path transform="rotate(162)" d="M-14.6,-88.8 A89 89 0 0 1 14.6,-88.8 L12.4,-40 L10.5,-24 L0,-16 L-10.5,-24 L-12.4,-40 Z" fill="#30353b"/><path transform="rotate(198)" d="M-14.6,-88.8 A89 89 0 0 1 14.6,-88.8 L12.4,-40 L10.5,-24 L0,-16 L-10.5,-24 L-12.4,-40 Z" fill="#30353b"/><path transform="rotate(234)" d="M-14.6,-88.8 A89 89 0 0 1 14.6,-88.8 L12.4,-40 L10.5,-24 L0,-16 L-10.5,-24 L-12.4,-40 Z" fill="#30353b"/><path transform="rotate(270)" d="M-14.6,-88.8 A89 89 0 0 1 14.6,-88.8 L12.4,-40 L10.5,-24 L0,-16 L-10.5,-24 L-12.4,-40 Z" fill="#30353b"/><path transform="rotate(306)" d="M-14.6,-88.8 A89 89 0 0 1 14.6,-88.8 L12.4,-40 L10.5,-24 L0,-16 L-10.5,-24 L-12.4,-40 Z" fill="#30353b"/><path transform="rotate(342)" d="M-14.6,-88.8 A89 89 0 0 1 14.6,-88.8 L12.4,-40 L10.5,-24 L0,-16 L-10.5,-24 L-12.4,-40 Z" fill="#30353b"/><polygon transform="rotate(0)" points="-3.8,-18 3.8,-18 2,-40.5 -2,-40.5" fill="#adb1b9"/><polygon transform="rotate(36)" points="-3.8,-18 3.8,-18 2,-40.5 -2,-40.5" fill="#adb1b9"/><polygon transform="rotate(72)" points="-3.8,-18 3.8,-18 2,-40.5 -2,-40.5" fill="#adb1b9"/><polygon transform="rotate(108)" points="-3.8,-18 3.8,-18 2,-40.5 -2,-40.5" fill="#adb1b9"/><polygon transform="rotate(144)" points="-3.8,-18 3.8,-18 2,-40.5 -2,-40.5" fill="#adb1b9"/><polygon transform="rotate(180)" points="-3.8,-18 3.8,-18 2,-40.5 -2,-40.5" fill="#adb1b9"/><polygon transform="rotate(216)" points="-3.8,-18 3.8,-18 2,-40.5 -2,-40.5" fill="#adb1b9"/><polygon transform="rotate(252)" points="-3.8,-18 3.8,-18 2,-40.5 -2,-40.5" fill="#adb1b9"/><polygon transform="rotate(288)" points="-3.8,-18 3.8,-18 2,-40.5 -2,-40.5" fill="#adb1b9"/><polygon transform="rotate(324)" points="-3.8,-18 3.8,-18 2,-40.5 -2,-40.5" fill="#adb1b9"/><circle r="21.8" fill="#adb1b9"/><circle r="12.9" fill="#30353b"/><circle r="9.1" fill="#4a2327"/></g><g transform="translate(939.1,989.4)"><circle r="122.6" fill="#adb0b8"/><circle r="70" fill="#1f4545"/><path transform="rotate(18)" d="M-14.6,-88.8 A89 89 0 0 1 14.6,-88.8 L12.4,-40 L10.5,-24 L0,-16 L-10.5,-24 L-12.4,-40 Z" fill="#30353b"/><path transform="rotate(54)" d="M-14.6,-88.8 A89 89 0 0 1 14.6,-88.8 L12.4,-40 L10.5,-24 L0,-16 L-10.5,-24 L-12.4,-40 Z" fill="#30353b"/><path transform="rotate(90)" d="M-14.6,-88.8 A89 89 0 0 1 14.6,-88.8 L12.4,-40 L10.5,-24 L0,-16 L-10.5,-24 L-12.4,-40 Z" fill="#30353b"/><path transform="rotate(126)" d="M-14.6,-88.8 A89 89 0 0 1 14.6,-88.8 L12.4,-40 L10.5,-24 L0,-16 L-10.5,-24 L-12.4,-40 Z" fill="#30353b"/><path transform="rotate(162)" d="M-14.6,-88.8 A89 89 0 0 1 14.6,-88.8 L12.4,-40 L10.5,-24 L0,-16 L-10.5,-24 L-12.4,-40 Z" fill="#30353b"/><path transform="rotate(198)" d="M-14.6,-88.8 A89 89 0 0 1 14.6,-88.8 L12.4,-40 L10.5,-24 L0,-16 L-10.5,-24 L-12.4,-40 Z" fill="#30353b"/><path transform="rotate(234)" d="M-14.6,-88.8 A89 89 0 0 1 14.6,-88.8 L12.4,-40 L10.5,-24 L0,-16 L-10.5,-24 L-12.4,-40 Z" fill="#30353b"/><path transform="rotate(270)" d="M-14.6,-88.8 A89 89 0 0 1 14.6,-88.8 L12.4,-40 L10.5,-24 L0,-16 L-10.5,-24 L-12.4,-40 Z" fill="#30353b"/><path transform="rotate(306)" d="M-14.6,-88.8 A89 89 0 0 1 14.6,-88.8 L12.4,-40 L10.5,-24 L0,-16 L-10.5,-24 L-12.4,-40 Z" fill="#30353b"/><path transform="rotate(342)" d="M-14.6,-88.8 A89 89 0 0 1 14.6,-88.8 L12.4,-40 L10.5,-24 L0,-16 L-10.5,-24 L-12.4,-40 Z" fill="#30353b"/><polygon transform="rotate(0)" points="-3.8,-18 3.8,-18 2,-40.5 -2,-40.5" fill="#adb1b9"/><polygon transform="rotate(36)" points="-3.8,-18 3.8,-18 2,-40.5 -2,-40.5" fill="#adb1b9"/><polygon transform="rotate(72)" points="-3.8,-18 3.8,-18 2,-40.5 -2,-40.5" fill="#adb1b9"/><polygon transform="rotate(108)" points="-3.8,-18 3.8,-18 2,-40.5 -2,-40.5" fill="#adb1b9"/><polygon transform="rotate(144)" points="-3.8,-18 3.8,-18 2,-40.5 -2,-40.5" fill="#adb1b9"/><polygon transform="rotate(180)" points="-3.8,-18 3.8,-18 2,-40.5 -2,-40.5" fill="#adb1b9"/><polygon transform="rotate(216)" points="-3.8,-18 3.8,-18 2,-40.5 -2,-40.5" fill="#adb1b9"/><polygon transform="rotate(252)" points="-3.8,-18 3.8,-18 2,-40.5 -2,-40.5" fill="#adb1b9"/><polygon transform="rotate(288)" points="-3.8,-18 3.8,-18 2,-40.5 -2,-40.5" fill="#adb1b9"/><polygon transform="rotate(324)" points="-3.8,-18 3.8,-18 2,-40.5 -2,-40.5" fill="#adb1b9"/><circle r="21.8" fill="#adb1b9"/><circle r="12.9" fill="#30353b"/><circle r="9.1" fill="#1f4545"/></g>
</g></svg>
<svg class="abs" style="left:505px;top:556px" width="100" height="100" viewBox="505 556 100 100">
<circle cx="555.5" cy="606.4" r="20" fill="none" stroke="#ffffff" stroke-width="1.4"/>
<circle cx="555.5" cy="606.4" r="20" fill="none" stroke="#ff1a1a" stroke-width="1.4" stroke-dasharray="7.85 7.85" stroke-dashoffset="3.9"/>
<g stroke="#000" stroke-width="1.6">
<line x1="555.5" y1="567" x2="555.5" y2="597"/><line x1="555.5" y1="617" x2="555.5" y2="647"/>
<line x1="515" y1="606.4" x2="545" y2="606.4"/><line x1="565" y1="606.4" x2="595" y2="606.4"/>
</g>
<circle cx="555.5" cy="606.4" r="5" fill="#f29a2a" stroke="#2a2a2a" stroke-width="1.5"/>
</svg>
<svg class="abs" style="left:1040px;top:0" width="81" height="215" viewBox="1040 0 81 215">
<g fill="#000" fill-opacity="0.26">
<circle cx="1077" cy="-1" r="27.7"/><circle cx="1077" cy="58.7" r="27.7"/><circle cx="1077" cy="118.7" r="27.7"/><circle cx="1077" cy="178.9" r="27.7"/>
</g>
<g fill="#dcdcdc">
<circle cx="1081" cy="-2.4" r="11.5"/>
<line x1="1062.8" y1="13.2" x2="1071.5" y2="6.2" stroke="#dcdcdc" stroke-width="3.6" stroke-linecap="round"/>
</g>
<line x1="1080" y1="-3" x2="1080" y2="2.6" stroke="#2a2a2a" stroke-width="1.6"/>
<g stroke="#dcdcdc" stroke-width="4.6" stroke-linecap="round" fill="none">
<line x1="1070.9" y1="47.6" x2="1072.4" y2="62"/>
<line x1="1079" y1="45.8" x2="1079" y2="60"/>
<line x1="1087" y1="47.8" x2="1085.6" y2="61"/>
<line x1="1091.6" y1="55.6" x2="1088.4" y2="64"/>
<line x1="1062.6" y1="61" x2="1069.5" y2="66"/>
</g>
<path d="M1069.2,58.6 L1090.6,58.6 L1089.6,64.5 Q1086.5,75 1078.6,75 Q1073.2,75 1069.4,70.6 L1063.6,63.4 L1069.2,63 Z" fill="#dcdcdc"/>
<g fill="#dcdcdc">
<circle cx="1067.5" cy="114" r="7"/><circle cx="1082.6" cy="111.7" r="8.8"/>
<rect x="1067.5" y="110" width="15" height="11"/>
<rect x="1069.4" y="123" width="13.2" height="11.7"/>
<polygon points="1084.7,129.7 1092.8,124.6 1092.8,134.7"/>
<rect x="1065.4" y="125.6" width="4" height="5.1"/>
</g>
<circle cx="1067.5" cy="114" r="2.2" fill="#e07a1a" stroke="#2a2a2a" stroke-width="0"/>
<circle cx="1067.5" cy="114" r="1" fill="#dcdcdc"/>
<circle cx="1082.6" cy="111.7" r="2.3" fill="#2a2a2a"/>
<circle cx="1082.6" cy="111.7" r="1" fill="#dcdcdc"/>
<g fill="none" stroke="#dcdcdc" stroke-width="2">
<rect x="1062" y="164.2" width="30" height="29.6"/>
<line x1="1072" y1="164" x2="1072" y2="194"/><line x1="1082" y1="164" x2="1082" y2="194"/>
<line x1="1062" y1="174" x2="1092" y2="174"/><line x1="1062" y1="184" x2="1092" y2="184"/>
</g>
</svg>
<div class="abs" style="left:1121px;top:0;width:7px;height:1280px;background:#161616"></div>
<svg class="abs" style="left:1128px;top:0" width="1136" height="1280" viewBox="1128 0 1136 1280" shape-rendering="crispEdges">
<rect x="1128" y="0" width="1136" height="1280" fill="#1d1d1d"/>
<g fill="#282828"><rect x="1131" y="22" width="6" height="6" fill="#2a2a2a"/><rect x="1132" y="60" width="4" height="4"/><rect x="1132" y="97" width="4" height="4"/><rect x="1132" y="133" width="4" height="4"/><rect x="1132" y="170" width="4" height="4"/><rect x="1131" y="206" width="6" height="6" fill="#2a2a2a"/><rect x="1132" y="243" width="4" height="4"/><rect x="1132" y="280" width="4" height="4"/><rect x="1132" y="316" width="4" height="4"/><rect x="1132" y="353" width="4" height="4"/><rect x="1131" y="388" width="6" height="6" fill="#2a2a2a"/><rect x="1132" y="426" width="4" height="4"/><rect x="1132" y="463" width="4" height="4"/><rect x="1132" y="499" width="4" height="4"/><rect x="1132" y="536" width="4" height="4"/><rect x="1131" y="572" width="6" height="6" fill="#2a2a2a"/><rect x="1132" y="609" width="4" height="4"/><rect x="1132" y="646" width="4" height="4"/><rect x="1132" y="682" width="4" height="4"/><rect x="1132" y="719" width="4" height="4"/><rect x="1131" y="754" width="6" height="6" fill="#2a2a2a"/><rect x="1132" y="792" width="4" height="4"/><rect x="1132" y="829" width="4" height="4"/><rect x="1132" y="865" width="4" height="4"/><rect x="1132" y="902" width="4" height="4"/><rect x="1131" y="938" width="6" height="6" fill="#2a2a2a"/><rect x="1132" y="975" width="4" height="4"/><rect x="1132" y="1012" width="4" height="4"/><rect x="1132" y="1048" width="4" height="4"/><rect x="1132" y="1085" width="4" height="4"/><rect x="1131" y="1120" width="6" height="6" fill="#2a2a2a"/><rect x="1132" y="1158" width="4" height="4"/><rect x="1132" y="1195" width="4" height="4"/><rect x="1132" y="1231" width="4" height="4"/><rect x="1132" y="1268" width="4" height="4"/><rect x="1169" y="24" width="4" height="4"/><rect x="1169" y="60" width="4" height="4"/><rect x="1169" y="97" width="4" height="4"/><rect x="1169" y="133" width="4" height="4"/><rect x="1169" y="170" width="4" height="4"/><rect x="1169" y="206" width="4" height="4"/><rect x="1169" y="243" width="4" height="4"/><rect x="1169" y="280" width="4" height="4"/><rect x="1169" y="316" width="4" height="4"/><rect x="1169" y="353" width="4" height="4"/><rect x="1169" y="390" width="4" height="4"/><rect x="1169" y="426" width="4" height="4"/><rect x="1169" y="463" width="4" height="4"/><rect x="1169" y="499" width="4" height="4"/><rect x="1169" y="536" width="4" height="4"/><rect x="1169" y="572" width="4" height="4"/><rect x="1169" y="609" width="4" height="4"/><rect x="1169" y="646" width="4" height="4"/><rect x="1169" y="682" width="4" height="4"/><rect x="1169" y="719" width="4" height="4"/><rect x="1169" y="756" width="4" height="4"/><rect x="1169" y="792" width="4" height="4"/><rect x="1169" y="829" width="4" height="4"/><rect x="1169" y="865" width="4" height="4"/><rect x="1169" y="902" width="4" height="4"/><rect x="1169" y="938" width="4" height="4"/><rect x="1169" y="975" width="4" height="4"/><rect x="1169" y="1012" width="4" height="4"/><rect x="1169" y="1048" width="4" height="4"/><rect x="1169" y="1085" width="4" height="4"/><rect x="1169" y="1122" width="4" height="4"/><rect x="1169" y="1158" width="4" height="4"/><rect x="1169" y="1195" width="4" height="4"/><rect x="1169" y="1231" width="4" height="4"/><rect x="1169" y="1268" width="4" height="4"/><rect x="1205" y="24" width="4" height="4"/><rect x="1205" y="60" width="4" height="4"/><rect x="1205" y="97" width="4" height="4"/><rect x="1205" y="133" width="4" height="4"/><rect x="1205" y="170" width="4" height="4"/><rect x="1205" y="206" width="4" height="4"/><rect x="1205" y="243" width="4" height="4"/><rect x="1205" y="280" width="4" height="4"/><rect x="1205" y="316" width="4" height="4"/><rect x="1205" y="353" width="4" height="4"/><rect x="1205" y="390" width="4" height="4"/><rect x="1205" y="426" width="4" height="4"/><rect x="1205" y="463" width="4" height="4"/><rect x="1205" y="499" width="4" height="4"/><rect x="1205" y="536" width="4" height="4"/><rect x="1205" y="572" width="4" height="4"/><rect x="1205" y="609" width="4" height="4"/><rect x="1205" y="646" width="4" height="4"/><rect x="1205" y="682" width="4" height="4"/><rect x="1205" y="719" width="4" height="4"/><rect x="1205" y="756" width="4" height="4"/><rect x="1205" y="792" width="4" height="4"/><rect x="1205" y="829" width="4" height="4"/><rect x="1205" y="865" width="4" height="4"/><rect x="1205" y="902" width="4" height="4"/><rect x="1205" y="938" width="4" height="4"/><rect x="1205" y="975" width="4" height="4"/><rect x="1205" y="1012" width="4" height="4"/><rect x="1205" y="1048" width="4" height="4"/><rect x="1205" y="1085" width="4" height="4"/><rect x="1205" y="1122" width="4" height="4"/><rect x="1205" y="1158" width="4" height="4"/><rect x="1205" y="1195" width="4" height="4"/><rect x="1205" y="1231" width="4" height="4"/><rect x="1205" y="1268" width="4" height="4"/><rect x="1242" y="24" width="4" height="4"/><rect x="1242" y="60" width="4" height="4"/><rect x="1242" y="97" width="4" height="4"/><rect x="1242" y="133" width="4" height="4"/><rect x="1242" y="170" width="4" height="4"/><rect x="1242" y="206" width="4" height="4"/><rect x="1242" y="243" width="4" height="4"/><rect x="1242" y="280" width="4" height="4"/><rect x="1242" y="316" width="4" height="4"/><rect x="1242" y="353" width="4" height="4"/><rect x="1242" y="390" width="4" height="4"/><rect x="1242" y="426" width="4" height="4"/><rect x="1242" y="463" width="4" height="4"/><rect x="1242" y="499" width="4" height="4"/><rect x="1242" y="536" width="4" height="4"/><rect x="1242" y="572" width="4" height="4"/><rect x="1242" y="609" width="4" height="4"/><rect x="1242" y="646" width="4" height="4"/><rect x="1242" y="682" width="4" height="4"/><rect x="1242" y="719" width="4" height="4"/><rect x="1242" y="756" width="4" height="4"/><rect x="1242" y="792" width="4" height="4"/><rect x="1242" y="829" width="4" height="4"/><rect x="1242" y="865" width="4" height="4"/><rect x="1242" y="902" width="4" height="4"/><rect x="1242" y="938" width="4" height="4"/><rect x="1242" y="975" width="4" height="4"/><rect x="1242" y="1012" width="4" height="4"/><rect x="1242" y="1048" width="4" height="4"/><rect x="1242" y="1085" width="4" height="4"/><rect x="1242" y="1122" width="4" height="4"/><rect x="1242" y="1158" width="4" height="4"/><rect x="1242" y="1195" width="4" height="4"/><rect x="1242" y="1231" width="4" height="4"/><rect x="1242" y="1268" width="4" height="4"/><rect x="1278" y="24" width="4" height="4"/><rect x="1278" y="60" width="4" height="4"/><rect x="1278" y="97" width="4" height="4"/><rect x="1278" y="133" width="4" height="4"/><rect x="1278" y="170" width="4" height="4"/><rect x="1278" y="206" width="4" height="4"/><rect x="1278" y="243" width="4" height="4"/><rect x="1278" y="280" width="4" height="4"/><rect x="1278" y="316" width="4" height="4"/><rect x="1278" y="353" width="4" height="4"/><rect x="1278" y="390" width="4" height="4"/><rect x="1278" y="426" width="4" height="4"/><rect x="1278" y="463" width="4" height="4"/><rect x="1278" y="499" width="4" height="4"/><rect x="1278" y="536" width="4" height="4"/><rect x="1278" y="572" width="4" height="4"/><rect x="1278" y="609" width="4" height="4"/><rect x="1278" y="646" width="4" height="4"/><rect x="1278" y="682" width="4" height="4"/><rect x="1278" y="719" width="4" height="4"/><rect x="1278" y="756" width="4" height="4"/><rect x="1278" y="792" width="4" height="4"/><rect x="1278" y="829" width="4" height="4"/><rect x="1278" y="865" width="4" height="4"/><rect x="1278" y="902" width="4" height="4"/><rect x="1278" y="938" width="4" height="4"/><rect x="1278" y="975" width="4" height="4"/><rect x="1278" y="1012" width="4" height="4"/><rect x="1278" y="1048" width="4" height="4"/><rect x="1278" y="1085" width="4" height="4"/><rect x="1278" y="1122" width="4" height="4"/><rect x="1278" y="1158" width="4" height="4"/><rect x="1278" y="1195" width="4" height="4"/><rect x="1278" y="1231" width="4" height="4"/><rect x="1278" y="1268" width="4" height="4"/><rect x="1314" y="22" width="6" height="6" fill="#2a2a2a"/><rect x="1315" y="60" width="4" height="4"/><rect x="1315" y="97" width="4" height="4"/><rect x="1315" y="133" width="4" height="4"/><rect x="1315" y="170" width="4" height="4"/><rect x="1314" y="206" width="6" height="6" fill="#2a2a2a"/><rect x="1315" y="243" width="4" height="4"/><rect x="1315" y="280" width="4" height="4"/><rect x="1315" y="316" width="4" height="4"/><rect x="1315" y="353" width="4" height="4"/><rect x="1314" y="388" width="6" height="6" fill="#2a2a2a"/><rect x="1315" y="426" width="4" height="4"/><rect x="1315" y="463" width="4" height="4"/><rect x="1315" y="499" width="4" height="4"/><rect x="1315" y="536" width="4" height="4"/><rect x="1314" y="572" width="6" height="6" fill="#2a2a2a"/><rect x="1315" y="609" width="4" height="4"/><rect x="1315" y="646" width="4" height="4"/><rect x="1315" y="682" width="4" height="4"/><rect x="1315" y="719" width="4" height="4"/><rect x="1314" y="754" width="6" height="6" fill="#2a2a2a"/><rect x="1315" y="792" width="4" height="4"/><rect x="1315" y="829" width="4" height="4"/><rect x="1315" y="865" width="4" height="4"/><rect x="1315" y="902" width="4" height="4"/><rect x="1314" y="938" width="6" height="6" fill="#2a2a2a"/><rect x="1315" y="975" width="4" height="4"/><rect x="1315" y="1012" width="4" height="4"/><rect x="1315" y="1048" width="4" height="4"/><rect x="1315" y="1085" width="4" height="4"/><rect x="1314" y="1120" width="6" height="6" fill="#2a2a2a"/><rect x="1315" y="1158" width="4" height="4"/><rect x="1315" y="1195" width="4" height="4"/><rect x="1315" y="1231" width="4" height="4"/><rect x="1315" y="1268" width="4" height="4"/><rect x="1352" y="24" width="4" height="4"/><rect x="1352" y="60" width="4" height="4"/><rect x="1352" y="97" width="4" height="4"/><rect x="1352" y="133" width="4" height="4"/><rect x="1352" y="170" width="4" height="4"/><rect x="1352" y="206" width="4" height="4"/><rect x="1352" y="243" width="4" height="4"/><rect x="1352" y="280" width="4" height="4"/><rect x="1352" y="316" width="4" height="4"/><rect x="1352" y="353" width="4" height="4"/><rect x="1352" y="390" width="4" height="4"/><rect x="1352" y="426" width="4" height="4"/><rect x="1352" y="463" width="4" height="4"/><rect x="1352" y="499" width="4" height="4"/><rect x="1352" y="536" width="4" height="4"/><rect x="1352" y="572" width="4" height="4"/><rect x="1352" y="609" width="4" height="4"/><rect x="1352" y="646" width="4" height="4"/><rect x="1352" y="682" width="4" height="4"/><rect x="1352" y="719" width="4" height="4"/><rect x="1352" y="756" width="4" height="4"/><rect x="1352" y="792" width="4" height="4"/><rect x="1352" y="829" width="4" height="4"/><rect x="1352" y="865" width="4" height="4"/><rect x="1352" y="902" width="4" height="4"/><rect x="1352" y="938" width="4" height="4"/><rect x="1352" y="975" width="4" height="4"/><rect x="1352" y="1012" width="4" height="4"/><rect x="1352" y="1048" width="4" height="4"/><rect x="1352" y="1085" width="4" height="4"/><rect x="1352" y="1122" width="4" height="4"/><rect x="1352" y="1158" width="4" height="4"/><rect x="1352" y="1195" width="4" height="4"/><rect x="1352" y="1231" width="4" height="4"/><rect x="1352" y="1268" width="4" height="4"/><rect x="1388" y="24" width="4" height="4"/><rect x="1388" y="60" width="4" height="4"/><rect x="1388" y="97" width="4" height="4"/><rect x="1388" y="133" width="4" height="4"/><rect x="1388" y="170" width="4" height="4"/><rect x="1388" y="206" width="4" height="4"/><rect x="1388" y="243" width="4" height="4"/><rect x="1388" y="280" width="4" height="4"/><rect x="1388" y="316" width="4" height="4"/><rect x="1388" y="353" width="4" height="4"/><rect x="1388" y="390" width="4" height="4"/><rect x="1388" y="426" width="4" height="4"/><rect x="1388" y="463" width="4" height="4"/><rect x="1388" y="499" width="4" height="4"/><rect x="1388" y="536" width="4" height="4"/><rect x="1388" y="572" width="4" height="4"/><rect x="1388" y="609" width="4" height="4"/><rect x="1388" y="646" width="4" height="4"/><rect x="1388" y="682" width="4" height="4"/><rect x="1388" y="719" width="4" height="4"/><rect x="1388" y="756" width="4" height="4"/><rect x="1388" y="792" width="4" height="4"/><rect x="1388" y="829" width="4" height="4"/><rect x="1388" y="865" width="4" height="4"/><rect x="1388" y="902" width="4" height="4"/><rect x="1388" y="938" width="4" height="4"/><rect x="1388" y="975" width="4" height="4"/><rect x="1388" y="1012" width="4" height="4"/><rect x="1388" y="1048" width="4" height="4"/><rect x="1388" y="1085" width="4" height="4"/><rect x="1388" y="1122" width="4" height="4"/><rect x="1388" y="1158" width="4" height="4"/><rect x="1388" y="1195" width="4" height="4"/><rect x="1388" y="1231" width="4" height="4"/><rect x="1388" y="1268" width="4" height="4"/><rect x="1425" y="24" width="4" height="4"/><rect x="1425" y="60" width="4" height="4"/><rect x="1425" y="97" width="4" height="4"/><rect x="1425" y="133" width="4" height="4"/><rect x="1425" y="170" width="4" height="4"/><rect x="1425" y="206" width="4" height="4"/><rect x="1425" y="243" width="4" height="4"/><rect x="1425" y="280" width="4" height="4"/><rect x="1425" y="316" width="4" height="4"/><rect x="1425" y="353" width="4" height="4"/><rect x="1425" y="390" width="4" height="4"/><rect x="1425" y="426" width="4" height="4"/><rect x="1425" y="463" width="4" height="4"/><rect x="1425" y="499" width="4" height="4"/><rect x="1425" y="536" width="4" height="4"/><rect x="1425" y="572" width="4" height="4"/><rect x="1425" y="609" width="4" height="4"/><rect x="1425" y="646" width="4" height="4"/><rect x="1425" y="682" width="4" height="4"/><rect x="1425" y="719" width="4" height="4"/><rect x="1425" y="756" width="4" height="4"/><rect x="1425" y="792" width="4" height="4"/><rect x="1425" y="829" width="4" height="4"/><rect x="1425" y="865" width="4" height="4"/><rect x="1425" y="902" width="4" height="4"/><rect x="1425" y="938" width="4" height="4"/><rect x="1425" y="975" width="4" height="4"/><rect x="1425" y="1012" width="4" height="4"/><rect x="1425" y="1048" width="4" height="4"/><rect x="1425" y="1085" width="4" height="4"/><rect x="1425" y="1122" width="4" height="4"/><rect x="1425" y="1158" width="4" height="4"/><rect x="1425" y="1195" width="4" height="4"/><rect x="1425" y="1231" width="4" height="4"/><rect x="1425" y="1268" width="4" height="4"/><rect x="1461" y="24" width="4" height="4"/><rect x="1461" y="60" width="4" height="4"/><rect x="1461" y="97" width="4" height="4"/><rect x="1461" y="133" width="4" height="4"/><rect x="1461" y="170" width="4" height="4"/><rect x="1461" y="206" width="4" height="4"/><rect x="1461" y="243" width="4" height="4"/><rect x="1461" y="280" width="4" height="4"/><rect x="1461" y="316" width="4" height="4"/><rect x="1461" y="353" width="4" height="4"/><rect x="1461" y="390" width="4" height="4"/><rect x="1461" y="426" width="4" height="4"/><rect x="1461" y="463" width="4" height="4"/><rect x="1461" y="499" width="4" height="4"/><rect x="1461" y="536" width="4" height="4"/><rect x="1461" y="572" width="4" height="4"/><rect x="1461" y="609" width="4" height="4"/><rect x="1461" y="646" width="4" height="4"/><rect x="1461" y="682" width="4" height="4"/><rect x="1461" y="719" width="4" height="4"/><rect x="1461" y="756" width="4" height="4"/><rect x="1461" y="792" width="4" height="4"/><rect x="1461" y="829" width="4" height="4"/><rect x="1461" y="865" width="4" height="4"/><rect x="1461" y="902" width="4" height="4"/><rect x="1461" y="938" width="4" height="4"/><rect x="1461" y="975" width="4" height="4"/><rect x="1461" y="1012" width="4" height="4"/><rect x="1461" y="1048" width="4" height="4"/><rect x="1461" y="1085" width="4" height="4"/><rect x="1461" y="1122" width="4" height="4"/><rect x="1461" y="1158" width="4" height="4"/><rect x="1461" y="1195" width="4" height="4"/><rect x="1461" y="1231" width="4" height="4"/><rect x="1461" y="1268" width="4" height="4"/><rect x="1497" y="22" width="6" height="6" fill="#2a2a2a"/><rect x="1498" y="60" width="4" height="4"/><rect x="1498" y="97" width="4" height="4"/><rect x="1498" y="133" width="4" height="4"/><rect x="1498" y="170" width="4" height="4"/><rect x="1497" y="206" width="6" height="6" fill="#2a2a2a"/><rect x="1498" y="243" width="4" height="4"/><rect x="1498" y="280" width="4" height="4"/><rect x="1498" y="316" width="4" height="4"/><rect x="1498" y="353" width="4" height="4"/><rect x="1497" y="388" width="6" height="6" fill="#2a2a2a"/><rect x="1498" y="426" width="4" height="4"/><rect x="1498" y="463" width="4" height="4"/><rect x="1498" y="499" width="4" height="4"/><rect x="1498" y="536" width="4" height="4"/><rect x="1497" y="572" width="6" height="6" fill="#2a2a2a"/><rect x="1498" y="609" width="4" height="4"/><rect x="1498" y="646" width="4" height="4"/><rect x="1498" y="682" width="4" height="4"/><rect x="1498" y="719" width="4" height="4"/><rect x="1497" y="754" width="6" height="6" fill="#2a2a2a"/><rect x="1498" y="792" width="4" height="4"/><rect x="1498" y="829" width="4" height="4"/><rect x="1498" y="865" width="4" height="4"/><rect x="1498" y="902" width="4" height="4"/><rect x="1497" y="938" width="6" height="6" fill="#2a2a2a"/><rect x="1498" y="975" width="4" height="4"/><rect x="1498" y="1012" width="4" height="4"/><rect x="1498" y="1048" width="4" height="4"/><rect x="1498" y="1085" width="4" height="4"/><rect x="1497" y="1120" width="6" height="6" fill="#2a2a2a"/><rect x="1498" y="1158" width="4" height="4"/><rect x="1498" y="1195" width="4" height="4"/><rect x="1498" y="1231" width="4" height="4"/><rect x="1498" y="1268" width="4" height="4"/><rect x="1535" y="24" width="4" height="4"/><rect x="1535" y="60" width="4" height="4"/><rect x="1535" y="97" width="4" height="4"/><rect x="1535" y="133" width="4" height="4"/><rect x="1535" y="170" width="4" height="4"/><rect x="1535" y="206" width="4" height="4"/><rect x="1535" y="243" width="4" height="4"/><rect x="1535" y="280" width="4" height="4"/><rect x="1535" y="316" width="4" height="4"/><rect x="1535" y="353" width="4" height="4"/><rect x="1535" y="390" width="4" height="4"/><rect x="1535" y="426" width="4" height="4"/><rect x="1535" y="463" width="4" height="4"/><rect x="1535" y="499" width="4" height="4"/><rect x="1535" y="536" width="4" height="4"/><rect x="1535" y="572" width="4" height="4"/><rect x="1535" y="609" width="4" height="4"/><rect x="1535" y="646" width="4" height="4"/><rect x="1535" y="682" width="4" height="4"/><rect x="1535" y="719" width="4" height="4"/><rect x="1535" y="756" width="4" height="4"/><rect x="1535" y="792" width="4" height="4"/><rect x="1535" y="829" width="4" height="4"/><rect x="1535" y="865" width="4" height="4"/><rect x="1535" y="902" width="4" height="4"/><rect x="1535" y="938" width="4" height="4"/><rect x="1535" y="975" width="4" height="4"/><rect x="1535" y="1012" width="4" height="4"/><rect x="1535" y="1048" width="4" height="4"/><rect x="1535" y="1085" width="4" height="4"/><rect x="1535" y="1122" width="4" height="4"/><rect x="1535" y="1158" width="4" height="4"/><rect x="1535" y="1195" width="4" height="4"/><rect x="1535" y="1231" width="4" height="4"/><rect x="1535" y="1268" width="4" height="4"/><rect x="1571" y="24" width="4" height="4"/><rect x="1571" y="60" width="4" height="4"/><rect x="1571" y="97" width="4" height="4"/><rect x="1571" y="133" width="4" height="4"/><rect x="1571" y="170" width="4" height="4"/><rect x="1571" y="206" width="4" height="4"/><rect x="1571" y="243" width="4" height="4"/><rect x="1571" y="280" width="4" height="4"/><rect x="1571" y="316" width="4" height="4"/><rect x="1571" y="353" width="4" height="4"/><rect x="1571" y="390" width="4" height="4"/><rect x="1571" y="426" width="4" height="4"/><rect x="1571" y="463" width="4" height="4"/><rect x="1571" y="499" width="4" height="4"/><rect x="1571" y="536" width="4" height="4"/><rect x="1571" y="572" width="4" height="4"/><rect x="1571" y="609" width="4" height="4"/><rect x="1571" y="646" width="4" height="4"/><rect x="1571" y="682" width="4" height="4"/><rect x="1571" y="719" width="4" height="4"/><rect x="1571" y="756" width="4" height="4"/><rect x="1571" y="792" width="4" height="4"/><rect x="1571" y="829" width="4" height="4"/><rect x="1571" y="865" width="4" height="4"/><rect x="1571" y="902" width="4" height="4"/><rect x="1571" y="938" width="4" height="4"/><rect x="1571" y="975" width="4" height="4"/><rect x="1571" y="1012" width="4" height="4"/><rect x="1571" y="1048" width="4" height="4"/><rect x="1571" y="1085" width="4" height="4"/><rect x="1571" y="1122" width="4" height="4"/><rect x="1571" y="1158" width="4" height="4"/><rect x="1571" y="1195" width="4" height="4"/><rect x="1571" y="1231" width="4" height="4"/><rect x="1571" y="1268" width="4" height="4"/><rect x="1608" y="24" width="4" height="4"/><rect x="1608" y="60" width="4" height="4"/><rect x="1608" y="97" width="4" height="4"/><rect x="1608" y="133" width="4" height="4"/><rect x="1608" y="170" width="4" height="4"/><rect x="1608" y="206" width="4" height="4"/><rect x="1608" y="243" width="4" height="4"/><rect x="1608" y="280" width="4" height="4"/><rect x="1608" y="316" width="4" height="4"/><rect x="1608" y="353" width="4" height="4"/><rect x="1608" y="390" width="4" height="4"/><rect x="1608" y="426" width="4" height="4"/><rect x="1608" y="463" width="4" height="4"/><rect x="1608" y="499" width="4" height="4"/><rect x="1608" y="536" width="4" height="4"/><rect x="1608" y="572" width="4" height="4"/><rect x="1608" y="609" width="4" height="4"/><rect x="1608" y="646" width="4" height="4"/><rect x="1608" y="682" width="4" height="4"/><rect x="1608" y="719" width="4" height="4"/><rect x="1608" y="756" width="4" height="4"/><rect x="1608" y="792" width="4" height="4"/><rect x="1608" y="829" width="4" height="4"/><rect x="1608" y="865" width="4" height="4"/><rect x="1608" y="902" width="4" height="4"/><rect x="1608" y="938" width="4" height="4"/><rect x="1608" y="975" width="4" height="4"/><rect x="1608" y="1012" width="4" height="4"/><rect x="1608" y="1048" width="4" height="4"/><rect x="1608" y="1085" width="4" height="4"/><rect x="1608" y="1122" width="4" height="4"/><rect x="1608" y="1158" width="4" height="4"/><rect x="1608" y="1195" width="4" height="4"/><rect x="1608" y="1231" width="4" height="4"/><rect x="1608" y="1268" width="4" height="4"/><rect x="1644" y="24" width="4" height="4"/><rect x="1644" y="60" width="4" height="4"/><rect x="1644" y="97" width="4" height="4"/><rect x="1644" y="133" width="4" height="4"/><rect x="1644" y="170" width="4" height="4"/><rect x="1644" y="206" width="4" height="4"/><rect x="1644" y="243" width="4" height="4"/><rect x="1644" y="280" width="4" height="4"/><rect x="1644" y="316" width="4" height="4"/><rect x="1644" y="353" width="4" height="4"/><rect x="1644" y="390" width="4" height="4"/><rect x="1644" y="426" width="4" height="4"/><rect x="1644" y="463" width="4" height="4"/><rect x="1644" y="499" width="4" height="4"/><rect x="1644" y="536" width="4" height="4"/><rect x="1644" y="572" width="4" height="4"/><rect x="1644" y="609" width="4" height="4"/><rect x="1644" y="646" width="4" height="4"/><rect x="1644" y="682" width="4" height="4"/><rect x="1644" y="719" width="4" height="4"/><rect x="1644" y="756" width="4" height="4"/><rect x="1644" y="792" width="4" height="4"/><rect x="1644" y="829" width="4" height="4"/><rect x="1644" y="865" width="4" height="4"/><rect x="1644" y="902" width="4" height="4"/><rect x="1644" y="938" width="4" height="4"/><rect x="1644" y="975" width="4" height="4"/><rect x="1644" y="1012" width="4" height="4"/><rect x="1644" y="1048" width="4" height="4"/><rect x="1644" y="1085" width="4" height="4"/><rect x="1644" y="1122" width="4" height="4"/><rect x="1644" y="1158" width="4" height="4"/><rect x="1644" y="1195" width="4" height="4"/><rect x="1644" y="1231" width="4" height="4"/><rect x="1644" y="1268" width="4" height="4"/><rect x="1680" y="22" width="6" height="6" fill="#2a2a2a"/><rect x="1681" y="60" width="4" height="4"/><rect x="1681" y="97" width="4" height="4"/><rect x="1681" y="133" width="4" height="4"/><rect x="1681" y="170" width="4" height="4"/><rect x="1680" y="206" width="6" height="6" fill="#2a2a2a"/><rect x="1681" y="243" width="4" height="4"/><rect x="1681" y="280" width="4" height="4"/><rect x="1681" y="316" width="4" height="4"/><rect x="1681" y="353" width="4" height="4"/><rect x="1680" y="388" width="6" height="6" fill="#2a2a2a"/><rect x="1681" y="426" width="4" height="4"/><rect x="1681" y="463" width="4" height="4"/><rect x="1681" y="499" width="4" height="4"/><rect x="1681" y="536" width="4" height="4"/><rect x="1680" y="572" width="6" height="6" fill="#2a2a2a"/><rect x="1681" y="609" width="4" height="4"/><rect x="1681" y="646" width="4" height="4"/><rect x="1681" y="682" width="4" height="4"/><rect x="1681" y="719" width="4" height="4"/><rect x="1680" y="754" width="6" height="6" fill="#2a2a2a"/><rect x="1681" y="792" width="4" height="4"/><rect x="1681" y="829" width="4" height="4"/><rect x="1681" y="865" width="4" height="4"/><rect x="1681" y="902" width="4" height="4"/><rect x="1680" y="938" width="6" height="6" fill="#2a2a2a"/><rect x="1681" y="975" width="4" height="4"/><rect x="1681" y="1012" width="4" height="4"/><rect x="1681" y="1048" width="4" height="4"/><rect x="1681" y="1085" width="4" height="4"/><rect x="1680" y="1120" width="6" height="6" fill="#2a2a2a"/><rect x="1681" y="1158" width="4" height="4"/><rect x="1681" y="1195" width="4" height="4"/><rect x="1681" y="1231" width="4" height="4"/><rect x="1681" y="1268" width="4" height="4"/><rect x="1718" y="24" width="4" height="4"/><rect x="1718" y="60" width="4" height="4"/><rect x="1718" y="97" width="4" height="4"/><rect x="1718" y="133" width="4" height="4"/><rect x="1718" y="170" width="4" height="4"/><rect x="1718" y="206" width="4" height="4"/><rect x="1718" y="243" width="4" height="4"/><rect x="1718" y="280" width="4" height="4"/><rect x="1718" y="316" width="4" height="4"/><rect x="1718" y="353" width="4" height="4"/><rect x="1718" y="390" width="4" height="4"/><rect x="1718" y="426" width="4" height="4"/><rect x="1718" y="463" width="4" height="4"/><rect x="1718" y="499" width="4" height="4"/><rect x="1718" y="536" width="4" height="4"/><rect x="1718" y="572" width="4" height="4"/><rect x="1718" y="609" width="4" height="4"/><rect x="1718" y="646" width="4" height="4"/><rect x="1718" y="682" width="4" height="4"/><rect x="1718" y="719" width="4" height="4"/><rect x="1718" y="756" width="4" height="4"/><rect x="1718" y="792" width="4" height="4"/><rect x="1718" y="829" width="4" height="4"/><rect x="1718" y="865" width="4" height="4"/><rect x="1718" y="902" width="4" height="4"/><rect x="1718" y="938" width="4" height="4"/><rect x="1718" y="975" width="4" height="4"/><rect x="1718" y="1012" width="4" height="4"/><rect x="1718" y="1048" width="4" height="4"/><rect x="1718" y="1085" width="4" height="4"/><rect x="1718" y="1122" width="4" height="4"/><rect x="1718" y="1158" width="4" height="4"/><rect x="1718" y="1195" width="4" height="4"/><rect x="1718" y="1231" width="4" height="4"/><rect x="1718" y="1268" width="4" height="4"/><rect x="1754" y="24" width="4" height="4"/><rect x="1754" y="60" width="4" height="4"/><rect x="1754" y="97" width="4" height="4"/><rect x="1754" y="133" width="4" height="4"/><rect x="1754" y="170" width="4" height="4"/><rect x="1754" y="206" width="4" height="4"/><rect x="1754" y="243" width="4" height="4"/><rect x="1754" y="280" width="4" height="4"/><rect x="1754" y="316" width="4" height="4"/><rect x="1754" y="353" width="4" height="4"/><rect x="1754" y="390" width="4" height="4"/><rect x="1754" y="426" width="4" height="4"/><rect x="1754" y="463" width="4" height="4"/><rect x="1754" y="499" width="4" height="4"/><rect x="1754" y="536" width="4" height="4"/><rect x="1754" y="572" width="4" height="4"/><rect x="1754" y="609" width="4" height="4"/><rect x="1754" y="646" width="4" height="4"/><rect x="1754" y="682" width="4" height="4"/><rect x="1754" y="719" width="4" height="4"/><rect x="1754" y="756" width="4" height="4"/><rect x="1754" y="792" width="4" height="4"/><rect x="1754" y="829" width="4" height="4"/><rect x="1754" y="865" width="4" height="4"/><rect x="1754" y="902" width="4" height="4"/><rect x="1754" y="938" width="4" height="4"/><rect x="1754" y="975" width="4" height="4"/><rect x="1754" y="1012" width="4" height="4"/><rect x="1754" y="1048" width="4" height="4"/><rect x="1754" y="1085" width="4" height="4"/><rect x="1754" y="1122" width="4" height="4"/><rect x="1754" y="1158" width="4" height="4"/><rect x="1754" y="1195" width="4" height="4"/><rect x="1754" y="1231" width="4" height="4"/><rect x="1754" y="1268" width="4" height="4"/><rect x="1791" y="24" width="4" height="4"/><rect x="1791" y="60" width="4" height="4"/><rect x="1791" y="97" width="4" height="4"/><rect x="1791" y="133" width="4" height="4"/><rect x="1791" y="170" width="4" height="4"/><rect x="1791" y="206" width="4" height="4"/><rect x="1791" y="243" width="4" height="4"/><rect x="1791" y="280" width="4" height="4"/><rect x="1791" y="316" width="4" height="4"/><rect x="1791" y="353" width="4" height="4"/><rect x="1791" y="390" width="4" height="4"/><rect x="1791" y="426" width="4" height="4"/><rect x="1791" y="463" width="4" height="4"/><rect x="1791" y="499" width="4" height="4"/><rect x="1791" y="536" width="4" height="4"/><rect x="1791" y="572" width="4" height="4"/><rect x="1791" y="609" width="4" height="4"/><rect x="1791" y="646" width="4" height="4"/><rect x="1791" y="682" width="4" height="4"/><rect x="1791" y="719" width="4" height="4"/><rect x="1791" y="756" width="4" height="4"/><rect x="1791" y="792" width="4" height="4"/><rect x="1791" y="829" width="4" height="4"/><rect x="1791" y="865" width="4" height="4"/><rect x="1791" y="902" width="4" height="4"/><rect x="1791" y="938" width="4" height="4"/><rect x="1791" y="975" width="4" height="4"/><rect x="1791" y="1012" width="4" height="4"/><rect x="1791" y="1048" width="4" height="4"/><rect x="1791" y="1085" width="4" height="4"/><rect x="1791" y="1122" width="4" height="4"/><rect x="1791" y="1158" width="4" height="4"/><rect x="1791" y="1195" width="4" height="4"/><rect x="1791" y="1231" width="4" height="4"/><rect x="1791" y="1268" width="4" height="4"/><rect x="1827" y="24" width="4" height="4"/><rect x="1827" y="60" width="4" height="4"/><rect x="1827" y="97" width="4" height="4"/><rect x="1827" y="133" width="4" height="4"/><rect x="1827" y="170" width="4" height="4"/><rect x="1827" y="206" width="4" height="4"/><rect x="1827" y="243" width="4" height="4"/><rect x="1827" y="280" width="4" height="4"/><rect x="1827" y="316" width="4" height="4"/><rect x="1827" y="353" width="4" height="4"/><rect x="1827" y="390" width="4" height="4"/><rect x="1827" y="426" width="4" height="4"/><rect x="1827" y="463" width="4" height="4"/><rect x="1827" y="499" width="4" height="4"/><rect x="1827" y="536" width="4" height="4"/><rect x="1827" y="572" width="4" height="4"/><rect x="1827" y="609" width="4" height="4"/><rect x="1827" y="646" width="4" height="4"/><rect x="1827" y="682" width="4" height="4"/><rect x="1827" y="719" width="4" height="4"/><rect x="1827" y="756" width="4" height="4"/><rect x="1827" y="792" width="4" height="4"/><rect x="1827" y="829" width="4" height="4"/><rect x="1827" y="865" width="4" height="4"/><rect x="1827" y="902" width="4" height="4"/><rect x="1827" y="938" width="4" height="4"/><rect x="1827" y="975" width="4" height="4"/><rect x="1827" y="1012" width="4" height="4"/><rect x="1827" y="1048" width="4" height="4"/><rect x="1827" y="1085" width="4" height="4"/><rect x="1827" y="1122" width="4" height="4"/><rect x="1827" y="1158" width="4" height="4"/><rect x="1827" y="1195" width="4" height="4"/><rect x="1827" y="1231" width="4" height="4"/><rect x="1827" y="1268" width="4" height="4"/><rect x="1863" y="22" width="6" height="6" fill="#2a2a2a"/><rect x="1864" y="60" width="4" height="4"/><rect x="1864" y="97" width="4" height="4"/><rect x="1864" y="133" width="4" height="4"/><rect x="1864" y="170" width="4" height="4"/><rect x="1863" y="206" width="6" height="6" fill="#2a2a2a"/><rect x="1864" y="243" width="4" height="4"/><rect x="1864" y="280" width="4" height="4"/><rect x="1864" y="316" width="4" height="4"/><rect x="1864" y="353" width="4" height="4"/><rect x="1863" y="388" width="6" height="6" fill="#2a2a2a"/><rect x="1864" y="426" width="4" height="4"/><rect x="1864" y="463" width="4" height="4"/><rect x="1864" y="499" width="4" height="4"/><rect x="1864" y="536" width="4" height="4"/><rect x="1863" y="572" width="6" height="6" fill="#2a2a2a"/><rect x="1864" y="609" width="4" height="4"/><rect x="1864" y="646" width="4" height="4"/><rect x="1864" y="682" width="4" height="4"/><rect x="1864" y="719" width="4" height="4"/><rect x="1863" y="754" width="6" height="6" fill="#2a2a2a"/><rect x="1864" y="792" width="4" height="4"/><rect x="1864" y="829" width="4" height="4"/><rect x="1864" y="865" width="4" height="4"/><rect x="1864" y="902" width="4" height="4"/><rect x="1863" y="938" width="6" height="6" fill="#2a2a2a"/><rect x="1864" y="975" width="4" height="4"/><rect x="1864" y="1012" width="4" height="4"/><rect x="1864" y="1048" width="4" height="4"/><rect x="1864" y="1085" width="4" height="4"/><rect x="1863" y="1120" width="6" height="6" fill="#2a2a2a"/><rect x="1864" y="1158" width="4" height="4"/><rect x="1864" y="1195" width="4" height="4"/><rect x="1864" y="1231" width="4" height="4"/><rect x="1864" y="1268" width="4" height="4"/><rect x="1901" y="24" width="4" height="4"/><rect x="1901" y="60" width="4" height="4"/><rect x="1901" y="97" width="4" height="4"/><rect x="1901" y="133" width="4" height="4"/><rect x="1901" y="170" width="4" height="4"/><rect x="1901" y="206" width="4" height="4"/><rect x="1901" y="243" width="4" height="4"/><rect x="1901" y="280" width="4" height="4"/><rect x="1901" y="316" width="4" height="4"/><rect x="1901" y="353" width="4" height="4"/><rect x="1901" y="390" width="4" height="4"/><rect x="1901" y="426" width="4" height="4"/><rect x="1901" y="463" width="4" height="4"/><rect x="1901" y="499" width="4" height="4"/><rect x="1901" y="536" width="4" height="4"/><rect x="1901" y="572" width="4" height="4"/><rect x="1901" y="609" width="4" height="4"/><rect x="1901" y="646" width="4" height="4"/><rect x="1901" y="682" width="4" height="4"/><rect x="1901" y="719" width="4" height="4"/><rect x="1901" y="756" width="4" height="4"/><rect x="1901" y="792" width="4" height="4"/><rect x="1901" y="829" width="4" height="4"/><rect x="1901" y="865" width="4" height="4"/><rect x="1901" y="902" width="4" height="4"/><rect x="1901" y="938" width="4" height="4"/><rect x="1901" y="975" width="4" height="4"/><rect x="1901" y="1012" width="4" height="4"/><rect x="1901" y="1048" width="4" height="4"/><rect x="1901" y="1085" width="4" height="4"/><rect x="1901" y="1122" width="4" height="4"/><rect x="1901" y="1158" width="4" height="4"/><rect x="1901" y="1195" width="4" height="4"/><rect x="1901" y="1231" width="4" height="4"/><rect x="1901" y="1268" width="4" height="4"/><rect x="1937" y="24" width="4" height="4"/><rect x="1937" y="60" width="4" height="4"/><rect x="1937" y="97" width="4" height="4"/><rect x="1937" y="133" width="4" height="4"/><rect x="1937" y="170" width="4" height="4"/><rect x="1937" y="206" width="4" height="4"/><rect x="1937" y="243" width="4" height="4"/><rect x="1937" y="280" width="4" height="4"/><rect x="1937" y="316" width="4" height="4"/><rect x="1937" y="353" width="4" height="4"/><rect x="1937" y="390" width="4" height="4"/><rect x="1937" y="426" width="4" height="4"/><rect x="1937" y="463" width="4" height="4"/><rect x="1937" y="499" width="4" height="4"/><rect x="1937" y="536" width="4" height="4"/><rect x="1937" y="572" width="4" height="4"/><rect x="1937" y="609" width="4" height="4"/><rect x="1937" y="646" width="4" height="4"/><rect x="1937" y="682" width="4" height="4"/><rect x="1937" y="719" width="4" height="4"/><rect x="1937" y="756" width="4" height="4"/><rect x="1937" y="792" width="4" height="4"/><rect x="1937" y="829" width="4" height="4"/><rect x="1937" y="865" width="4" height="4"/><rect x="1937" y="902" width="4" height="4"/><rect x="1937" y="938" width="4" height="4"/><rect x="1937" y="975" width="4" height="4"/><rect x="1937" y="1012" width="4" height="4"/><rect x="1937" y="1048" width="4" height="4"/><rect x="1937" y="1085" width="4" height="4"/><rect x="1937" y="1122" width="4" height="4"/><rect x="1937" y="1158" width="4" height="4"/><rect x="1937" y="1195" width="4" height="4"/><rect x="1937" y="1231" width="4" height="4"/><rect x="1937" y="1268" width="4" height="4"/><rect x="1974" y="24" width="4" height="4"/><rect x="1974" y="60" width="4" height="4"/><rect x="1974" y="97" width="4" height="4"/><rect x="1974" y="133" width="4" height="4"/><rect x="1974" y="170" width="4" height="4"/><rect x="1974" y="206" width="4" height="4"/><rect x="1974" y="243" width="4" height="4"/><rect x="1974" y="280" width="4" height="4"/><rect x="1974" y="316" width="4" height="4"/><rect x="1974" y="353" width="4" height="4"/><rect x="1974" y="390" width="4" height="4"/><rect x="1974" y="426" width="4" height="4"/><rect x="1974" y="463" width="4" height="4"/><rect x="1974" y="499" width="4" height="4"/><rect x="1974" y="536" width="4" height="4"/><rect x="1974" y="572" width="4" height="4"/><rect x="1974" y="609" width="4" height="4"/><rect x="1974" y="646" width="4" height="4"/><rect x="1974" y="682" width="4" height="4"/><rect x="1974" y="719" width="4" height="4"/><rect x="1974" y="756" width="4" height="4"/><rect x="1974" y="792" width="4" height="4"/><rect x="1974" y="829" width="4" height="4"/><rect x="1974" y="865" width="4" height="4"/><rect x="1974" y="902" width="4" height="4"/><rect x="1974" y="938" width="4" height="4"/><rect x="1974" y="975" width="4" height="4"/><rect x="1974" y="1012" width="4" height="4"/><rect x="1974" y="1048" width="4" height="4"/><rect x="1974" y="1085" width="4" height="4"/><rect x="1974" y="1122" width="4" height="4"/><rect x="1974" y="1158" width="4" height="4"/><rect x="1974" y="1195" width="4" height="4"/><rect x="1974" y="1231" width="4" height="4"/><rect x="1974" y="1268" width="4" height="4"/><rect x="2010" y="24" width="4" height="4"/><rect x="2010" y="60" width="4" height="4"/><rect x="2010" y="97" width="4" height="4"/><rect x="2010" y="133" width="4" height="4"/><rect x="2010" y="170" width="4" height="4"/><rect x="2010" y="206" width="4" height="4"/><rect x="2010" y="243" width="4" height="4"/><rect x="2010" y="280" width="4" height="4"/><rect x="2010" y="316" width="4" height="4"/><rect x="2010" y="353" width="4" height="4"/><rect x="2010" y="390" width="4" height="4"/><rect x="2010" y="426" width="4" height="4"/><rect x="2010" y="463" width="4" height="4"/><rect x="2010" y="499" width="4" height="4"/><rect x="2010" y="536" width="4" height="4"/><rect x="2010" y="572" width="4" height="4"/><rect x="2010" y="609" width="4" height="4"/><rect x="2010" y="646" width="4" height="4"/><rect x="2010" y="682" width="4" height="4"/><rect x="2010" y="719" width="4" height="4"/><rect x="2010" y="756" width="4" height="4"/><rect x="2010" y="792" width="4" height="4"/><rect x="2010" y="829" width="4" height="4"/><rect x="2010" y="865" width="4" height="4"/><rect x="2010" y="902" width="4" height="4"/><rect x="2010" y="938" width="4" height="4"/><rect x="2010" y="975" width="4" height="4"/><rect x="2010" y="1012" width="4" height="4"/><rect x="2010" y="1048" width="4" height="4"/><rect x="2010" y="1085" width="4" height="4"/><rect x="2010" y="1122" width="4" height="4"/><rect x="2010" y="1158" width="4" height="4"/><rect x="2010" y="1195" width="4" height="4"/><rect x="2010" y="1231" width="4" height="4"/><rect x="2010" y="1268" width="4" height="4"/><rect x="2046" y="22" width="6" height="6" fill="#2a2a2a"/><rect x="2047" y="60" width="4" height="4"/><rect x="2047" y="97" width="4" height="4"/><rect x="2047" y="133" width="4" height="4"/><rect x="2047" y="170" width="4" height="4"/><rect x="2046" y="206" width="6" height="6" fill="#2a2a2a"/><rect x="2047" y="243" width="4" height="4"/><rect x="2047" y="280" width="4" height="4"/><rect x="2047" y="316" width="4" height="4"/><rect x="2047" y="353" width="4" height="4"/><rect x="2046" y="388" width="6" height="6" fill="#2a2a2a"/><rect x="2047" y="426" width="4" height="4"/><rect x="2047" y="463" width="4" height="4"/><rect x="2047" y="499" width="4" height="4"/><rect x="2047" y="536" width="4" height="4"/><rect x="2046" y="572" width="6" height="6" fill="#2a2a2a"/><rect x="2047" y="609" width="4" height="4"/><rect x="2047" y="646" width="4" height="4"/><rect x="2047" y="682" width="4" height="4"/><rect x="2047" y="719" width="4" height="4"/><rect x="2046" y="754" width="6" height="6" fill="#2a2a2a"/><rect x="2047" y="792" width="4" height="4"/><rect x="2047" y="829" width="4" height="4"/><rect x="2047" y="865" width="4" height="4"/><rect x="2047" y="902" width="4" height="4"/><rect x="2046" y="938" width="6" height="6" fill="#2a2a2a"/><rect x="2047" y="975" width="4" height="4"/><rect x="2047" y="1012" width="4" height="4"/><rect x="2047" y="1048" width="4" height="4"/><rect x="2047" y="1085" width="4" height="4"/><rect x="2046" y="1120" width="6" height="6" fill="#2a2a2a"/><rect x="2047" y="1158" width="4" height="4"/><rect x="2047" y="1195" width="4" height="4"/><rect x="2047" y="1231" width="4" height="4"/><rect x="2047" y="1268" width="4" height="4"/><rect x="2084" y="24" width="4" height="4"/><rect x="2084" y="60" width="4" height="4"/><rect x="2084" y="97" width="4" height="4"/><rect x="2084" y="133" width="4" height="4"/><rect x="2084" y="170" width="4" height="4"/><rect x="2084" y="206" width="4" height="4"/><rect x="2084" y="243" width="4" height="4"/><rect x="2084" y="280" width="4" height="4"/><rect x="2084" y="316" width="4" height="4"/><rect x="2084" y="353" width="4" height="4"/><rect x="2084" y="390" width="4" height="4"/><rect x="2084" y="426" width="4" height="4"/><rect x="2084" y="463" width="4" height="4"/><rect x="2084" y="499" width="4" height="4"/><rect x="2084" y="536" width="4" height="4"/><rect x="2084" y="572" width="4" height="4"/><rect x="2084" y="609" width="4" height="4"/><rect x="2084" y="646" width="4" height="4"/><rect x="2084" y="682" width="4" height="4"/><rect x="2084" y="719" width="4" height="4"/><rect x="2084" y="756" width="4" height="4"/><rect x="2084" y="792" width="4" height="4"/><rect x="2084" y="829" width="4" height="4"/><rect x="2084" y="865" width="4" height="4"/><rect x="2084" y="902" width="4" height="4"/><rect x="2084" y="938" width="4" height="4"/><rect x="2084" y="975" width="4" height="4"/><rect x="2084" y="1012" width="4" height="4"/><rect x="2084" y="1048" width="4" height="4"/><rect x="2084" y="1085" width="4" height="4"/><rect x="2084" y="1122" width="4" height="4"/><rect x="2084" y="1158" width="4" height="4"/><rect x="2084" y="1195" width="4" height="4"/><rect x="2084" y="1231" width="4" height="4"/><rect x="2084" y="1268" width="4" height="4"/><rect x="2120" y="24" width="4" height="4"/><rect x="2120" y="60" width="4" height="4"/><rect x="2120" y="97" width="4" height="4"/><rect x="2120" y="133" width="4" height="4"/><rect x="2120" y="170" width="4" height="4"/><rect x="2120" y="206" width="4" height="4"/><rect x="2120" y="243" width="4" height="4"/><rect x="2120" y="280" width="4" height="4"/><rect x="2120" y="316" width="4" height="4"/><rect x="2120" y="353" width="4" height="4"/><rect x="2120" y="390" width="4" height="4"/><rect x="2120" y="426" width="4" height="4"/><rect x="2120" y="463" width="4" height="4"/><rect x="2120" y="499" width="4" height="4"/><rect x="2120" y="536" width="4" height="4"/><rect x="2120" y="572" width="4" height="4"/><rect x="2120" y="609" width="4" height="4"/><rect x="2120" y="646" width="4" height="4"/><rect x="2120" y="682" width="4" height="4"/><rect x="2120" y="719" width="4" height="4"/><rect x="2120" y="756" width="4" height="4"/><rect x="2120" y="792" width="4" height="4"/><rect x="2120" y="829" width="4" height="4"/><rect x="2120" y="865" width="4" height="4"/><rect x="2120" y="902" width="4" height="4"/><rect x="2120" y="938" width="4" height="4"/><rect x="2120" y="975" width="4" height="4"/><rect x="2120" y="1012" width="4" height="4"/><rect x="2120" y="1048" width="4" height="4"/><rect x="2120" y="1085" width="4" height="4"/><rect x="2120" y="1122" width="4" height="4"/><rect x="2120" y="1158" width="4" height="4"/><rect x="2120" y="1195" width="4" height="4"/><rect x="2120" y="1231" width="4" height="4"/><rect x="2120" y="1268" width="4" height="4"/><rect x="2157" y="24" width="4" height="4"/><rect x="2157" y="60" width="4" height="4"/><rect x="2157" y="97" width="4" height="4"/><rect x="2157" y="133" width="4" height="4"/><rect x="2157" y="170" width="4" height="4"/><rect x="2157" y="206" width="4" height="4"/><rect x="2157" y="243" width="4" height="4"/><rect x="2157" y="280" width="4" height="4"/><rect x="2157" y="316" width="4" height="4"/><rect x="2157" y="353" width="4" height="4"/><rect x="2157" y="390" width="4" height="4"/><rect x="2157" y="426" width="4" height="4"/><rect x="2157" y="463" width="4" height="4"/><rect x="2157" y="499" width="4" height="4"/><rect x="2157" y="536" width="4" height="4"/><rect x="2157" y="572" width="4" height="4"/><rect x="2157" y="609" width="4" height="4"/><rect x="2157" y="646" width="4" height="4"/><rect x="2157" y="682" width="4" height="4"/><rect x="2157" y="719" width="4" height="4"/><rect x="2157" y="756" width="4" height="4"/><rect x="2157" y="792" width="4" height="4"/><rect x="2157" y="829" width="4" height="4"/><rect x="2157" y="865" width="4" height="4"/><rect x="2157" y="902" width="4" height="4"/><rect x="2157" y="938" width="4" height="4"/><rect x="2157" y="975" width="4" height="4"/><rect x="2157" y="1012" width="4" height="4"/><rect x="2157" y="1048" width="4" height="4"/><rect x="2157" y="1085" width="4" height="4"/><rect x="2157" y="1122" width="4" height="4"/><rect x="2157" y="1158" width="4" height="4"/><rect x="2157" y="1195" width="4" height="4"/><rect x="2157" y="1231" width="4" height="4"/><rect x="2157" y="1268" width="4" height="4"/><rect x="2193" y="24" width="4" height="4"/><rect x="2193" y="60" width="4" height="4"/><rect x="2193" y="97" width="4" height="4"/><rect x="2193" y="133" width="4" height="4"/><rect x="2193" y="170" width="4" height="4"/><rect x="2193" y="206" width="4" height="4"/><rect x="2193" y="243" width="4" height="4"/><rect x="2193" y="280" width="4" height="4"/><rect x="2193" y="316" width="4" height="4"/><rect x="2193" y="353" width="4" height="4"/><rect x="2193" y="390" width="4" height="4"/><rect x="2193" y="426" width="4" height="4"/><rect x="2193" y="463" width="4" height="4"/><rect x="2193" y="499" width="4" height="4"/><rect x="2193" y="536" width="4" height="4"/><rect x="2193" y="572" width="4" height="4"/><rect x="2193" y="609" width="4" height="4"/><rect x="2193" y="646" width="4" height="4"/><rect x="2193" y="682" width="4" height="4"/><rect x="2193" y="719" width="4" height="4"/><rect x="2193" y="756" width="4" height="4"/><rect x="2193" y="792" width="4" height="4"/><rect x="2193" y="829" width="4" height="4"/><rect x="2193" y="865" width="4" height="4"/><rect x="2193" y="902" width="4" height="4"/><rect x="2193" y="938" width="4" height="4"/><rect x="2193" y="975" width="4" height="4"/><rect x="2193" y="1012" width="4" height="4"/><rect x="2193" y="1048" width="4" height="4"/><rect x="2193" y="1085" width="4" height="4"/><rect x="2193" y="1122" width="4" height="4"/><rect x="2193" y="1158" width="4" height="4"/><rect x="2193" y="1195" width="4" height="4"/><rect x="2193" y="1231" width="4" height="4"/><rect x="2193" y="1268" width="4" height="4"/><rect x="2229" y="22" width="6" height="6" fill="#2a2a2a"/><rect x="2230" y="60" width="4" height="4"/><rect x="2230" y="97" width="4" height="4"/><rect x="2230" y="133" width="4" height="4"/><rect x="2230" y="170" width="4" height="4"/><rect x="2229" y="206" width="6" height="6" fill="#2a2a2a"/><rect x="2230" y="243" width="4" height="4"/><rect x="2230" y="280" width="4" height="4"/><rect x="2230" y="316" width="4" height="4"/><rect x="2230" y="353" width="4" height="4"/><rect x="2229" y="388" width="6" height="6" fill="#2a2a2a"/><rect x="2230" y="426" width="4" height="4"/><rect x="2230" y="463" width="4" height="4"/><rect x="2230" y="499" width="4" height="4"/><rect x="2230" y="536" width="4" height="4"/><rect x="2229" y="572" width="6" height="6" fill="#2a2a2a"/><rect x="2230" y="609" width="4" height="4"/><rect x="2230" y="646" width="4" height="4"/><rect x="2230" y="682" width="4" height="4"/><rect x="2230" y="719" width="4" height="4"/><rect x="2229" y="754" width="6" height="6" fill="#2a2a2a"/><rect x="2230" y="792" width="4" height="4"/><rect x="2230" y="829" width="4" height="4"/><rect x="2230" y="865" width="4" height="4"/><rect x="2230" y="902" width="4" height="4"/><rect x="2229" y="938" width="6" height="6" fill="#2a2a2a"/><rect x="2230" y="975" width="4" height="4"/><rect x="2230" y="1012" width="4" height="4"/><rect x="2230" y="1048" width="4" height="4"/><rect x="2230" y="1085" width="4" height="4"/><rect x="2229" y="1120" width="6" height="6" fill="#2a2a2a"/><rect x="2230" y="1158" width="4" height="4"/><rect x="2230" y="1195" width="4" height="4"/><rect x="2230" y="1231" width="4" height="4"/><rect x="2230" y="1268" width="4" height="4"/></g>
</svg>
<div class="node" style="left:1179.3px;top:69.9px;width:438.0px;height:505.30000000000007px">
<div class="hdr" style="height:36.1px;background:#794a1e"></div></div>
<svg class="abs" style="left:1195.8px;top:80.5px;overflow:visible" width="21" height="14" viewBox="0 0 21 14"><polyline points="3,3 10.5,11 18,3" fill="none" stroke="#000" stroke-opacity="0.5" stroke-width="3" transform="translate(0.8,0.8)"/><polyline points="3,3 10.5,11 18,3" fill="none" stroke="#e6e6e6" stroke-width="2"/></svg>
<div class="t" style="top:77.6px;font-size:21.5px;left:1223.8px;letter-spacing:-0.75px;">T_Pipes_D</div>
<div class="t" style="top:123.5px;font-size:21.5px;right:666.4px;">Color</div>
<div class="t" style="top:163.7px;font-size:21.5px;right:666.4px;">Alpha</div>
<div class="abs" style="left:1197.3px;top:210.5px;width:402px;height:36.5px;border-radius:7px;background:#282828;box-shadow:inset 0 0 0 1.7px #3d3d3d"></div>
<div class="abs" style="left:1254px;top:212.3px;width:198px;height:33px;background:#1d1d1d"></div>
<div class="abs" style="left:1452.9px;top:212.3px;width:35.1px;height:33px;background:#545454"></div>
<div class="abs" style="left:1490px;top:212.3px;width:34px;height:33px;background:#545454"></div>
<div class="abs" style="left:1526px;top:212.3px;width:34.9px;height:33px;background:#545454"></div>
<div class="abs" style="left:1562.9px;top:212.3px;width:35px;height:33px;background:#545454;border-radius:0 6px 6px 0"></div>
<svg class="abs" style="left:1200px;top:210px" width="400" height="40" viewBox="1200 210 400 40">
<g fill="none" stroke="#e6e6e6" stroke-width="1.8">
<polyline points="1206.9,236 1206.9,216.9 1231,216.9 1231,240.2 1224.5,240.2"/>
</g>
<polygon points="1206,241 1222.6,241 1214.3,227" fill="#e6e6e6"/>
<circle cx="1223.5" cy="224" r="2.2" fill="#e6e6e6"/>
<polyline points="1236.7,227.5 1242.3,233 1247.8,227.5" fill="none" stroke="#e6e6e6" stroke-width="1.8"/>
<path d="M1469.4,217 L1480.5,220.6 L1480.5,228 Q1480.5,237 1469.4,241.2 Q1458.2,237 1458.2,228 L1458.2,220.6 Z" fill="none" stroke="#bdbdbd" stroke-width="1.6"/>
<g fill="none" stroke="#e6e6e6" stroke-width="1.8">
<polyline points="1499.4,221.9 1495.3,221.9 1495.3,240.4 1513.2,240.4 1513.2,236.4"/>
<polyline points="1502.6,233.4 1502.6,217.3 1512,217.3"/>
<polyline points="1518.6,222.4 1518.6,233 1502,233"/>
</g>
<polygon points="1511.6,216.4 1519.5,222.8 1511.6,222.8" fill="#e6e6e6"/>
<g fill="#e6e6e6">
<rect x="1530.1" y="229.6" width="16.7" height="11.2"/>
<polygon points="1548,230.4 1556.2,223.6 1556.2,233.2 1548,240.6"/>
<rect x="1534.3" y="221" width="12.5" height="7.6"/>
<polygon points="1540.2,216.6 1552.6,216.6 1552.6,225.4 1548.4,229 1548.4,221 1540.2,221"/>
</g>
<g stroke="#e6e6e6" stroke-width="1.8"><line x1="1573.1" y1="221" x2="1588" y2="235.7"/><line x1="1588" y1="221" x2="1573.1" y2="235.7"/></g>
</svg>
<div class="t" style="top:218.6px;font-size:21.5px;left:1266.8px;letter-spacing:-0.75px;">T_Pipes_D</div>
<div class="dd" style="left:1197.3px;top:256.2px;width:401.8px;height:35.8px"></div>
<div class="t" style="top:264.6px;font-size:21.5px;left:1212.6px;">Linear</div>
<svg class="abs" style="left:1579.0px;top:269.9px;overflow:visible" width="17" height="11.5" viewBox="0 0 17 11.5"><polyline points="3,3 8.5,8.5 14,3" fill="none" stroke="#000" stroke-opacity="0.5" stroke-width="3" transform="translate(0.8,0.8)"/><polyline points="3,3 8.5,8.5 14,3" fill="none" stroke="#e6e6e6" stroke-width="2"/></svg>
<div class="dd" style="left:1197.3px;top:302.3px;width:401.8px;height:35.8px"></div>
<div class="t" style="top:310.7px;font-size:21.5px;left:1212.6px;">Flat</div>
<svg class="abs" style="left:1579.0px;top:315.9px;overflow:visible" width="17" height="11.5" viewBox="0 0 17 11.5"><polyline points="3,3 8.5,8.5 14,3" fill="none" stroke="#000" stroke-opacity="0.5" stroke-width="3" transform="translate(0.8,0.8)"/><polyline points="3,3 8.5,8.5 14,3" fill="none" stroke="#e6e6e6" stroke-width="2"/></svg>
<div class="dd" style="left:1197.3px;top:348.1px;width:401.8px;height:35.8px"></div>
<div class="t" style="top:356.5px;font-size:21.5px;left:1212.6px;">Repeat</div>
<svg class="abs" style="left:1579.0px;top:361.8px;overflow:visible" width="17" height="11.5" viewBox="0 0 17 11.5"><polyline points="3,3 8.5,8.5 14,3" fill="none" stroke="#000" stroke-opacity="0.5" stroke-width="3" transform="translate(0.8,0.8)"/><polyline points="3,3 8.5,8.5 14,3" fill="none" stroke="#e6e6e6" stroke-width="2"/></svg>
<div class="dd" style="left:1197.3px;top:393.9px;width:401.8px;height:35.8px"></div>
<div class="t" style="top:402.3px;font-size:21.5px;left:1212.6px;">Single Image</div>
<svg class="abs" style="left:1579.0px;top:407.6px;overflow:visible" width="17" height="11.5" viewBox="0 0 17 11.5"><polyline points="3,3 8.5,8.5 14,3" fill="none" stroke="#000" stroke-opacity="0.5" stroke-width="3" transform="translate(0.8,0.8)"/><polyline points="3,3 8.5,8.5 14,3" fill="none" stroke="#e6e6e6" stroke-width="2"/></svg>
<div class="t" style="top:447.5px;font-size:21.5px;left:1197.8px;">Color Space</div>
<div class="dd" style="left:1339.7px;top:439.1px;width:259.4px;height:35.8px"></div>
<div class="t" style="top:447.5px;font-size:21.5px;left:1353.2px;">sRGB</div>
<svg class="abs" style="left:1579.0px;top:452.8px;overflow:visible" width="17" height="11.5" viewBox="0 0 17 11.5"><polyline points="3,3 8.5,8.5 14,3" fill="none" stroke="#000" stroke-opacity="0.5" stroke-width="3" transform="translate(0.8,0.8)"/><polyline points="3,3 8.5,8.5 14,3" fill="none" stroke="#e6e6e6" stroke-width="2"/></svg>
<div class="t" style="top:493.5px;font-size:21.5px;left:1197.8px;">Alpha</div>
<div class="dd" style="left:1339.7px;top:485.1px;width:259.4px;height:35.8px"></div>
<div class="t" style="top:493.5px;font-size:21.5px;left:1353.2px;">Straight</div>
<svg class="abs" style="left:1579.0px;top:498.8px;overflow:visible" width="17" height="11.5" viewBox="0 0 17 11.5"><polyline points="3,3 8.5,8.5 14,3" fill="none" stroke="#000" stroke-opacity="0.5" stroke-width="3" transform="translate(0.8,0.8)"/><polyline points="3,3 8.5,8.5 14,3" fill="none" stroke="#e6e6e6" stroke-width="2"/></svg>
<div class="t" style="top:538.6px;font-size:21.5px;left:1197.8px;">Vector</div>
<div class="node" style="left:1701.8px;top:25.8px;width:438.0000000000002px;height:1205.8px">
<div class="hdr" style="height:36.2px;background:#2d6a2d"></div></div>
<svg class="abs" style="left:1718.8px;top:36.5px;overflow:visible" width="21" height="14" viewBox="0 0 21 14"><polyline points="3,3 10.5,11 18,3" fill="none" stroke="#000" stroke-opacity="0.5" stroke-width="3" transform="translate(0.8,0.8)"/><polyline points="3,3 10.5,11 18,3" fill="none" stroke="#e6e6e6" stroke-width="2"/></svg>
<div class="t" style="top:33.6px;font-size:21.5px;left:1746.4px;letter-spacing:-0.4px;">Principled BSDF</div>
<div class="t" style="top:79.3px;font-size:21.5px;right:144.2px;letter-spacing:-1.4px;">BSDF</div>
<div class="dd" style="left:1720.3px;top:126.2px;width:401.7px;height:35.8px"></div>
<div class="t" style="top:134.6px;font-size:21.5px;left:1734.3px;letter-spacing:-1.6px;">GGX</div>
<svg class="abs" style="left:2101.4px;top:139.8px;overflow:visible" width="17" height="11.5" viewBox="0 0 17 11.5"><polyline points="3,3 8.5,8.5 14,3" fill="none" stroke="#000" stroke-opacity="0.5" stroke-width="3" transform="translate(0.8,0.8)"/><polyline points="3,3 8.5,8.5 14,3" fill="none" stroke="#e6e6e6" stroke-width="2"/></svg>
<div class="dd" style="left:1720.3px;top:172.3px;width:401.7px;height:35.8px"></div>
<div class="t" style="top:180.7px;font-size:21.5px;left:1734.3px;">Random Walk</div>
<svg class="abs" style="left:2101.4px;top:185.9px;overflow:visible" width="17" height="11.5" viewBox="0 0 17 11.5"><polyline points="3,3 8.5,8.5 14,3" fill="none" stroke="#000" stroke-opacity="0.5" stroke-width="3" transform="translate(0.8,0.8)"/><polyline points="3,3 8.5,8.5 14,3" fill="none" stroke="#e6e6e6" stroke-width="2"/></svg>
<div class="t" style="top:225.9px;font-size:21.5px;left:1721.3px;">Base Color</div>
<div class="sl" style="left:1722px;top:259.9px;width:398.8px;height:32px">
</div>
<div class="t" style="top:266.1px;font-size:21.5px;left:1749.5px;">Subsurface</div>
<div class="t" style="top:266.1px;font-size:21.5px;right:166.5px;letter-spacing:0.4px;">0.000</div>
<div class="dd" style="left:1720.3px;top:298.2px;width:401.7px;height:35.8px"></div>
<div class="t" style="top:306.4px;font-size:21.5px;left:1734.3px;">Subsurface Radius</div>
<svg class="abs" style="left:2101.4px;top:311.9px;overflow:visible" width="17" height="11.5" viewBox="0 0 17 11.5"><polyline points="3,3 8.5,8.5 14,3" fill="none" stroke="#000" stroke-opacity="0.5" stroke-width="3" transform="translate(0.8,0.8)"/><polyline points="3,3 8.5,8.5 14,3" fill="none" stroke="#e6e6e6" stroke-width="2"/></svg>
<div class="t" style="top:346.7px;font-size:21.5px;left:1721.3px;">Subsurface C...</div>
<div class="abs" style="left:1891px;top:340.2px;width:229.5px;height:32.6px;border-radius:6px;background:#e6e6e6;box-shadow:0 0 0 1.5px #2a2a2a"></div>
<div class="sl" style="left:1722px;top:380.6px;width:398.8px;height:32px">
<div class="fill" style="width:52.6px"></div>
</div>
<div class="t" style="top:386.9px;font-size:21.5px;left:1749.5px;">Subsurface IOR</div>
<div class="t" style="top:386.9px;font-size:21.5px;right:166.5px;letter-spacing:0.4px;">1.400</div>
<div class="sl" style="left:1722px;top:420.9px;width:398.8px;height:32px">
</div>
<div class="t" style="top:427.2px;font-size:21.5px;left:1749.5px;">Subsurface Anisotropy</div>
<div class="t" style="top:427.2px;font-size:21.5px;right:166.5px;letter-spacing:0.4px;">0.000</div>
<div class="sl" style="left:1722px;top:461.2px;width:398.8px;height:32px">
</div>
<div class="t" style="top:467.4px;font-size:21.5px;left:1749.5px;">Metallic</div>
<div class="t" style="top:467.4px;font-size:21.5px;right:166.5px;letter-spacing:0.4px;">0.000</div>
<div class="sl" style="left:1722px;top:501.4px;width:398.8px;height:32px">
<div class="fill" style="width:199.4px"></div>
</div>
<div class="t" style="top:507.7px;font-size:21.5px;left:1749.5px;">Specular</div>
<div class="t" style="top:507.7px;font-size:21.5px;right:166.5px;letter-spacing:0.4px;">0.500</div>
<div class="sl" style="left:1722px;top:541.7px;width:398.8px;height:32px">
</div>
<div class="t" style="top:548.0px;font-size:21.5px;left:1749.5px;">Specular Tint</div>
<div class="t" style="top:548.0px;font-size:21.5px;right:166.5px;letter-spacing:0.4px;">0.000</div>
<div class="sl" style="left:1722px;top:581.9px;width:398.8px;height:32px">
<div class="fill" style="width:398.8px"></div>
</div>
<div class="t" style="top:588.2px;font-size:21.5px;left:1749.5px;">Roughness</div>
<div class="t" style="top:588.2px;font-size:21.5px;right:166.5px;letter-spacing:0.4px;">1.000</div>
<div class="sl" style="left:1722px;top:622.2px;width:398.8px;height:32px">
</div>
<div class="t" style="top:628.5px;font-size:21.5px;left:1749.5px;">Anisotropic</div>
<div class="t" style="top:628.5px;font-size:21.5px;right:166.5px;letter-spacing:0.4px;">0.000</div>
<div class="sl" style="left:1722px;top:662.5px;width:398.8px;height:32px">
</div>
<div class="t" style="top:668.7px;font-size:21.5px;left:1749.5px;">Anisotropic Rotation</div>
<div class="t" style="top:668.7px;font-size:21.5px;right:166.5px;letter-spacing:0.4px;">0.000</div>
<div class="sl" style="left:1722px;top:702.7px;width:398.8px;height:32px">
</div>
<div class="t" style="top:709.0px;font-size:21.5px;left:1749.5px;">Sheen</div>
<div class="t" style="top:709.0px;font-size:21.5px;right:166.5px;letter-spacing:0.4px;">0.000</div>
<div class="sl" style="left:1722px;top:743.0px;width:398.8px;height:32px">
<div class="fill" style="width:199.4px"></div>
</div>
<div class="t" style="top:749.3px;font-size:21.5px;left:1749.5px;">Sheen Tint</div>
<div class="t" style="top:749.3px;font-size:21.5px;right:166.5px;letter-spacing:0.4px;">0.500</div>
<div class="sl" style="left:1722px;top:783.2px;width:398.8px;height:32px">
</div>
<div class="t" style="top:789.5px;font-size:21.5px;left:1749.5px;">Clearcoat</div>
<div class="t" style="top:789.5px;font-size:21.5px;right:166.5px;letter-spacing:0.4px;">0.000</div>
<div class="sl" style="left:1722px;top:823.5px;width:398.8px;height:32px">
<div class="fill" style="width:12.0px"></div>
</div>
<div class="t" style="top:829.8px;font-size:21.5px;left:1749.5px;">Clearcoat Roughness</div>
<div class="t" style="top:829.8px;font-size:21.5px;right:166.5px;letter-spacing:0.4px;">0.030</div>
<div class="sl" style="left:1722px;top:863.8px;width:398.8px;height:32px">
</div>
<div class="t" style="top:870.0px;font-size:21.5px;left:1749.5px;">IOR</div>
<div class="t" style="top:870.0px;font-size:21.5px;right:166.5px;letter-spacing:0.4px;">1.450</div>
<div class="sl" style="left:1722px;top:904.0px;width:398.8px;height:32px">
</div>
<div class="t" style="top:910.3px;font-size:21.5px;left:1749.5px;">Transmission</div>
<div class="t" style="top:910.3px;font-size:21.5px;right:166.5px;letter-spacing:0.4px;">0.000</div>
<div class="sl" style="left:1722px;top:944.3px;width:398.8px;height:32px">
</div>
<div class="t" style="top:950.6px;font-size:21.5px;left:1749.5px;">Transmission Roughness</div>
<div class="t" style="top:950.6px;font-size:21.5px;right:166.5px;letter-spacing:0.4px;">0.000</div>
<div class="t" style="top:990.8px;font-size:21.5px;left:1721.3px;">Emission</div>
<div class="abs" style="left:1891px;top:984.3px;width:229.5px;height:32.6px;border-radius:6px;background:#000000;box-shadow:0 0 0 1.5px #2a2a2a"></div>
<div class="sl" style="left:1722px;top:1024.8px;width:398.8px;height:32px">
</div>
<div class="t" style="top:1031.1px;font-size:21.5px;left:1749.5px;">Emission Strength</div>
<div class="t" style="top:1031.1px;font-size:21.5px;right:166.5px;letter-spacing:0.4px;">0.000</div>
<div class="sl" style="left:1722px;top:1065.1px;width:398.8px;height:32px">
<div class="fill" style="width:398.8px"></div>
</div>
<div class="t" style="top:1071.3px;font-size:21.5px;left:1749.5px;">Alpha</div>
<div class="t" style="top:1071.3px;font-size:21.5px;right:166.5px;letter-spacing:0.4px;">1.000</div>
<div class="t" style="top:1111.6px;font-size:21.5px;left:1721.3px;">Normal</div>
<div class="t" style="top:1151.9px;font-size:21.5px;left:1721.3px;">Clearcoat Normal</div>
<div class="t" style="top:1192.1px;font-size:21.5px;left:1721.3px;">Tangent</div>
<div class="node" style="left:2233px;top:25.5px;width:60px;height:220.2px">
<div class="hdr" style="height:36.6px;background:#3d1e27"></div></div>
<div class="abs" style="left:2251px;top:72px;width:40px;height:34px;border-radius:7px;box-shadow:inset 0 0 0 1.7px #3d3d3d"></div>
<svg class="abs" style="left:2249.5px;top:36.5px;overflow:visible" width="21" height="14" viewBox="0 0 21 14"><polyline points="3,3 10.5,11 18,3" fill="none" stroke="#000" stroke-opacity="0.5" stroke-width="3" transform="translate(0.8,0.8)"/><polyline points="3,3 10.5,11 18,3" fill="none" stroke="#e6e6e6" stroke-width="2"/></svg>
<div class="t" style="top:125.3px;font-size:21.5px;left:2252.8px;">S</div>
<div class="t" style="top:165.6px;font-size:21.5px;left:2252.8px;">V</div>
<div class="t" style="top:205.8px;font-size:21.5px;left:2252.8px;">D</div>
<svg class="abs" style="left:1128px;top:0;pointer-events:none" width="1136" height="1280" viewBox="1128 0 1136 1280">
<path d="M1617.8,133 C1659.5,133 1659.5,235.6 1701.2,235.6" fill="none" stroke="#111" stroke-opacity="0.55" stroke-width="6"/><path d="M1617.8,133 C1659.5,133 1659.5,235.6 1701.2,235.6" fill="none" stroke="#c7c729" stroke-width="3.8"/>
<path d="M2140.5,89 C2186.4,89 2186.4,134.5 2232.3,134.5" fill="none" stroke="#111" stroke-opacity="0.55" stroke-width="6"/><path d="M2140.5,89 C2186.4,89 2186.4,134.5 2232.3,134.5" fill="none" stroke="#63c763" stroke-width="3.8"/>
</svg>
<div class="sock" style="left:1609.3px;top:124.5px;background:#c7c729"></div>
<div class="sock" style="left:1609.3px;top:164.7px;background:#a1a1a1"></div>
<div class="sock" style="left:1170.3px;top:539.9px;background:#6363c7"></div>
<div class="sock" style="left:2132.0px;top:80.5px;background:#63c763"></div>
<div class="sock" style="left:1692.7px;top:227.1px;background:#c7c729"></div>
<div class="sock" style="left:1692.7px;top:267.4px;background:#a1a1a1"></div>
<div class="sock" style="left:1692.7px;top:307.6px;background:#6363c7"></div>
<div class="sock" style="left:1692.7px;top:347.9px;background:#c7c729"></div>
<div class="sock" style="left:1692.7px;top:388.1px;background:#a1a1a1"></div>
<div class="sock" style="left:1692.7px;top:428.4px;background:#a1a1a1"></div>
<div class="sock" style="left:1692.7px;top:468.7px;background:#a1a1a1"></div>
<div class="sock" style="left:1692.7px;top:508.9px;background:#a1a1a1"></div>
<div class="sock" style="left:1692.7px;top:549.2px;background:#a1a1a1"></div>
<div class="sock" style="left:1692.7px;top:589.4px;background:#a1a1a1"></div>
<div class="sock" style="left:1692.7px;top:629.7px;background:#a1a1a1"></div>
<div class="sock" style="left:1692.7px;top:670.0px;background:#a1a1a1"></div>
<div class="sock" style="left:1692.7px;top:710.2px;background:#a1a1a1"></div>
<div class="sock" style="left:1692.7px;top:750.5px;background:#a1a1a1"></div>
<div class="sock" style="left:1692.7px;top:790.7px;background:#a1a1a1"></div>
<div class="sock" style="left:1692.7px;top:831.0px;background:#a1a1a1"></div>
<div class="sock" style="left:1692.7px;top:871.3px;background:#a1a1a1"></div>
<div class="sock" style="left:1692.7px;top:911.5px;background:#a1a1a1"></div>
<div class="sock" style="left:1692.7px;top:951.8px;background:#a1a1a1"></div>
<div class="sock" style="left:1692.7px;top:992.0px;background:#c7c729"></div>
<div class="sock" style="left:1692.7px;top:1032.3px;background:#a1a1a1"></div>
<div class="sock" style="left:1692.7px;top:1072.6px;background:#a1a1a1"></div>
<div class="sock" style="left:1692.7px;top:1112.8px;background:#6363c7"></div>
<div class="sock" style="left:1692.7px;top:1153.1px;background:#6363c7"></div>
<div class="sock" style="left:1692.7px;top:1193.3px;background:#6363c7"></div>
<div class="sock" style="left:2223.8px;top:126.0px;background:#63c763"></div>
<div class="sock" style="left:2223.8px;top:166.5px;background:#63c763"></div>
<div class="sock" style="left:2223.8px;top:206.7px;background:#6363c7"></div>
<div class="abs" style="left:2255px;top:0;width:6px;height:1280px;background:rgba(255,255,255,0.09)"></div>
</body></html>
